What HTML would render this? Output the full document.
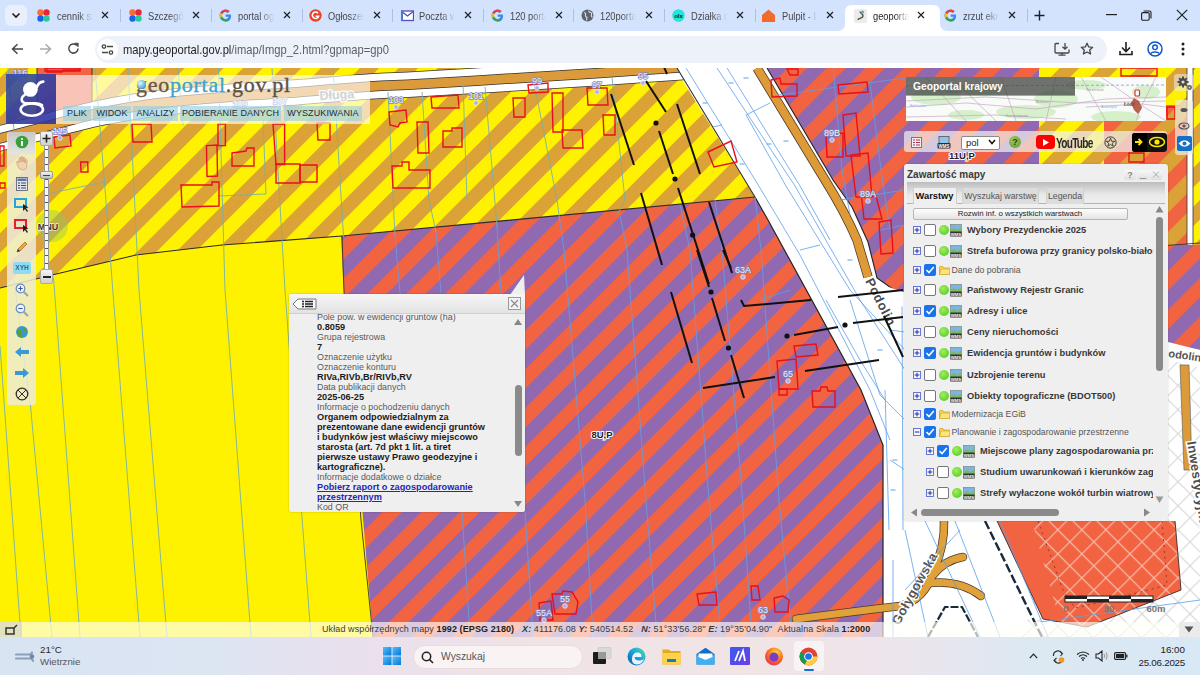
<!DOCTYPE html>
<html><head><meta charset="utf-8">
<style>
*{margin:0;padding:0;box-sizing:border-box}
html,body{width:1200px;height:675px;overflow:hidden;background:#fff;font-family:"Liberation Sans",sans-serif}
.abs{position:absolute}
svg{display:block}
#tabbar{position:absolute;left:0;top:0;width:1200px;height:31px;background:#d3e3fd}
.tt{position:absolute;top:8.5px;font-size:10.8px;line-height:14px;color:#474747;white-space:nowrap;width:42px;overflow:hidden;transform:scaleX(0.86);transform-origin:0 0;-webkit-mask-image:linear-gradient(90deg,#000 60%,transparent 100%)}
.tx{position:absolute;top:11px}
.tsep{position:absolute;top:9px;width:1px;height:13px;background:#a9c1ea}
#toolbar{position:absolute;left:0;top:31px;width:1200px;height:37px;background:#fff}
#omni{position:absolute;left:95px;top:36px;width:1012px;height:27px;border-radius:14px;background:#edf1f9}
#map{position:absolute;left:0;top:68px;width:1200px;height:569px;overflow:hidden;background:#fff200}
#status{position:absolute;left:0;top:622px;width:1200px;height:15px;background:rgba(255,255,250,0.66)}
#taskbar{position:absolute;left:0;top:637px;width:1200px;height:38px;background:linear-gradient(90deg,#d8e4f2 0%,#dde5f2 18%,#e9e0ee 28%,#f0e3e6 45%,#f1e4e5 62%,#ebe5ec 76%,#dde8f2 85%,#d8e8f5 100%)}
.menu{position:absolute;top:106px;height:15px;background:rgba(150,205,225,0.62);font-size:9px;color:#1b2e3a;text-align:center;line-height:15px;white-space:nowrap;letter-spacing:0.1px}
.pop div{font-size:8.9px;line-height:10px;color:#5a5a5a;white-space:nowrap;height:10px}
.pop div.b{font-weight:bold;color:#1c1c1c;font-size:9.2px}
.pop div.lnk{color:#2626b8;text-decoration:underline}
.hb{position:absolute;top:170px;width:12px;height:10px;border-radius:2px;background:linear-gradient(#f8f8f8,#dedede);font-size:9px;font-weight:bold;color:#888;text-align:center;line-height:10px}
.tab{position:absolute;top:187px;height:17px;background:#dcdcdc;border:1px solid #d0d0d0;border-bottom:none;font-size:8.8px;color:#555;text-align:center;line-height:17px;white-space:nowrap}
.lt{font-weight:bold;font-size:9.3px;color:#383838;white-space:nowrap;line-height:12px}
.ld{font-size:8.7px;color:#555;white-space:nowrap;line-height:12px}
</style></head><body>
<!-- ============ TAB BAR ============ -->
<div id="tabbar">
 <div class="abs" style="left:5px;top:5px;width:22px;height:21px;border-radius:6px;background:#e9effb"></div>
 <svg class="abs" style="left:11px;top:12px" width="10" height="7" viewBox="0 0 10 7"><path d="M1.5 1.5 L5 5 L8.5 1.5" stroke="#1f1f1f" stroke-width="1.6" fill="none"/></svg>
<svg class="abs" style="left:837px;top:4px" width="111" height="27" viewBox="0 0 111 27"><path d="M0 27 Q8 27 8 19 L8 8 Q8 1 15 1 L96 1 Q103 1 103 8 L103 19 Q103 27 111 27 Z" fill="#fff"/></svg>
<svg class="abs" style="left:36.5px;top:9px" width="13" height="14" viewBox="0 0 13 14"><circle cx="3.5" cy="3.5" r="3.2" fill="#f0703a"/><circle cx="9.5" cy="3.5" r="3.2" fill="#e8263a"/><circle cx="3.5" cy="9.5" r="3.2" fill="#1a63e8"/><circle cx="9.5" cy="9.5" r="3.2" fill="#2cc7a4"/></svg>
<div class="tt" style="left:57px;color:#474747">cennik sz</div>
<svg class="tx" style="left:101px" width="8" height="8" viewBox="0 0 8 8"><path d="M1 1L7 7M7 1L1 7" stroke="#1f1f1f" stroke-width="1.15"/></svg>
<div class="tsep" style="left:120px"></div>
<svg class="abs" style="left:128.5px;top:9px" width="13" height="14" viewBox="0 0 13 14"><circle cx="3.5" cy="3.5" r="3.2" fill="#f0703a"/><circle cx="9.5" cy="3.5" r="3.2" fill="#e8263a"/><circle cx="3.5" cy="9.5" r="3.2" fill="#1a63e8"/><circle cx="9.5" cy="9.5" r="3.2" fill="#2cc7a4"/></svg>
<div class="tt" style="left:148px;color:#474747">Szczegóły</div>
<svg class="tx" style="left:192px" width="8" height="8" viewBox="0 0 8 8"><path d="M1 1L7 7M7 1L1 7" stroke="#1f1f1f" stroke-width="1.15"/></svg>
<div class="tsep" style="left:211px"></div>
<svg class="abs" style="left:218.5px;top:9px" width="13" height="14" viewBox="0 0 13 14"><path d="M11.8 5.4H6.6v2.3h3a3 3 0 0 1-3 2.4 3.6 3.6 0 1 1 2.3-6.4l1.7-1.6A6 6 0 1 0 6.6 12.5c3.3 0 5.5-2.3 5.5-5.6 0-.5 0-1-.3-1.5z" fill="#4285f4"/><path d="M1.3 3.7l1.9 1.4A3.6 3.6 0 0 1 8.9 3.8l1.7-1.6A6 6 0 0 0 1.3 3.7z" fill="#ea4335"/><path d="M6.6 12.5a6 6 0 0 0 4-1.5L8.7 9.5a3.6 3.6 0 0 1-5.5-1.9L1.3 9.1a6 6 0 0 0 5.3 3.4z" fill="#34a853"/><path d="M1.3 3.7a6 6 0 0 0 0 5.4l1.9-1.5a3.6 3.6 0 0 1 0-2.5z" fill="#fbbc05"/></svg>
<div class="tt" style="left:238px;color:#474747">portal og</div>
<svg class="tx" style="left:283px" width="8" height="8" viewBox="0 0 8 8"><path d="M1 1L7 7M7 1L1 7" stroke="#1f1f1f" stroke-width="1.15"/></svg>
<div class="tsep" style="left:302px"></div>
<svg class="abs" style="left:308.5px;top:9px" width="13" height="14" viewBox="0 0 13 14"><circle cx="6.5" cy="6.5" r="6.2" fill="#e8452c"/><path d="M9 4.2A3.2 3.2 0 1 0 9.6 7.2H6.6" stroke="#fff" stroke-width="1.6" fill="none"/></svg>
<div class="tt" style="left:328px;color:#474747">Ogłoszen</div>
<svg class="tx" style="left:373px" width="8" height="8" viewBox="0 0 8 8"><path d="M1 1L7 7M7 1L1 7" stroke="#1f1f1f" stroke-width="1.15"/></svg>
<div class="tsep" style="left:392px"></div>
<svg class="abs" style="left:400.5px;top:9px" width="13" height="14" viewBox="0 0 13 14"><rect x="0.5" y="2" width="12" height="9.5" fill="#fff" stroke="#5b4bb5" stroke-width="1.3"/><path d="M0.8 2.5 L6.5 7 L12.2 2.5" stroke="#5b4bb5" stroke-width="1.3" fill="none"/><rect x="0" y="1.5" width="2" height="10.5" fill="#4a77d9"/></svg>
<div class="tt" style="left:419px;color:#474747">Poczta w</div>
<svg class="tx" style="left:464px" width="8" height="8" viewBox="0 0 8 8"><path d="M1 1L7 7M7 1L1 7" stroke="#1f1f1f" stroke-width="1.15"/></svg>
<div class="tsep" style="left:483px"></div>
<svg class="abs" style="left:490.5px;top:9px" width="13" height="14" viewBox="0 0 13 14"><path d="M11.8 5.4H6.6v2.3h3a3 3 0 0 1-3 2.4 3.6 3.6 0 1 1 2.3-6.4l1.7-1.6A6 6 0 1 0 6.6 12.5c3.3 0 5.5-2.3 5.5-5.6 0-.5 0-1-.3-1.5z" fill="#4285f4"/><path d="M1.3 3.7l1.9 1.4A3.6 3.6 0 0 1 8.9 3.8l1.7-1.6A6 6 0 0 0 1.3 3.7z" fill="#ea4335"/><path d="M6.6 12.5a6 6 0 0 0 4-1.5L8.7 9.5a3.6 3.6 0 0 1-5.5-1.9L1.3 9.1a6 6 0 0 0 5.3 3.4z" fill="#34a853"/><path d="M1.3 3.7a6 6 0 0 0 0 5.4l1.9-1.5a3.6 3.6 0 0 1 0-2.5z" fill="#fbbc05"/></svg>
<div class="tt" style="left:510px;color:#474747">120 porta</div>
<svg class="tx" style="left:555px" width="8" height="8" viewBox="0 0 8 8"><path d="M1 1L7 7M7 1L1 7" stroke="#1f1f1f" stroke-width="1.15"/></svg>
<div class="tsep" style="left:573px"></div>
<svg class="abs" style="left:580.5px;top:9px" width="13" height="14" viewBox="0 0 13 14"><circle cx="6.5" cy="6.5" r="6" fill="#5f6368"/><path d="M3 3.5c1.5.3 2 1.5 1.5 2.5s.5 2 1.5 2.3l-.5 3M8 1.5c-.5 1 .5 2 1.5 2s1.5 1.5 1 2.5c-.5 1 .2 2 1 2" stroke="#d3e3fd" stroke-width="1.1" fill="none"/></svg>
<div class="tt" style="left:600px;color:#474747">120portal</div>
<svg class="tx" style="left:645px" width="8" height="8" viewBox="0 0 8 8"><path d="M1 1L7 7M7 1L1 7" stroke="#1f1f1f" stroke-width="1.15"/></svg>
<div class="tsep" style="left:664px"></div>
<svg class="abs" style="left:671.5px;top:9px" width="13" height="14" viewBox="0 0 13 14"><circle cx="6.5" cy="6.5" r="6.3" fill="#23e5db"/><text x="6.5" y="8.6" font-size="6" font-weight="bold" text-anchor="middle" fill="#002f34" font-family="Liberation Sans">olx</text></svg>
<div class="tt" style="left:691px;color:#474747">Działka n</div>
<svg class="tx" style="left:736px" width="8" height="8" viewBox="0 0 8 8"><path d="M1 1L7 7M7 1L1 7" stroke="#1f1f1f" stroke-width="1.15"/></svg>
<div class="tsep" style="left:755px"></div>
<svg class="abs" style="left:761.5px;top:9px" width="13" height="14" viewBox="0 0 13 14"><path d="M6.5 0.5 L13 6 L13 13 L0 13 L0 6 Z" fill="#f26b2a"/></svg>
<div class="tt" style="left:782px;color:#474747">Pulpit - I</div>
<svg class="tx" style="left:826px" width="8" height="8" viewBox="0 0 8 8"><path d="M1 1L7 7M7 1L1 7" stroke="#1f1f1f" stroke-width="1.15"/></svg>
<svg class="abs" style="left:853.5px;top:9px" width="13" height="14" viewBox="0 0 13 14"><rect x="0" y="0" width="13" height="14" rx="2" fill="#ececec"/><path d="M4 11c0-2 5-1.5 5-4S6 4 6 2.5" stroke="#6b5a4a" stroke-width="1.6" fill="none"/><circle cx="8.5" cy="3" r="1.6" fill="#5aa9d6"/></svg>
<div class="tt" style="left:873px;color:#1f1f1f">geoportal</div>
<svg class="tx" style="left:917px" width="8" height="8" viewBox="0 0 8 8"><path d="M1 1L7 7M7 1L1 7" stroke="#1f1f1f" stroke-width="1.15"/></svg>
<svg class="abs" style="left:943.5px;top:9px" width="13" height="14" viewBox="0 0 13 14"><path d="M11.8 5.4H6.6v2.3h3a3 3 0 0 1-3 2.4 3.6 3.6 0 1 1 2.3-6.4l1.7-1.6A6 6 0 1 0 6.6 12.5c3.3 0 5.5-2.3 5.5-5.6 0-.5 0-1-.3-1.5z" fill="#4285f4"/><path d="M1.3 3.7l1.9 1.4A3.6 3.6 0 0 1 8.9 3.8l1.7-1.6A6 6 0 0 0 1.3 3.7z" fill="#ea4335"/><path d="M6.6 12.5a6 6 0 0 0 4-1.5L8.7 9.5a3.6 3.6 0 0 1-5.5-1.9L1.3 9.1a6 6 0 0 0 5.3 3.4z" fill="#34a853"/><path d="M1.3 3.7a6 6 0 0 0 0 5.4l1.9-1.5a3.6 3.6 0 0 1 0-2.5z" fill="#fbbc05"/></svg>
<div class="tt" style="left:963px;color:#474747">zrzut ekr</div>
<svg class="tx" style="left:1008px" width="8" height="8" viewBox="0 0 8 8"><path d="M1 1L7 7M7 1L1 7" stroke="#1f1f1f" stroke-width="1.15"/></svg>
<div class="tsep" style="left:1027px"></div>
<svg class="abs" style="left:1034px;top:10px" width="11" height="11" viewBox="0 0 11 11"><path d="M5.5 0.5V10.5M0.5 5.5H10.5" stroke="#1f1f1f" stroke-width="1.4"/></svg>
<svg class="abs" style="left:1106px;top:14px" width="11" height="2"><rect width="11" height="1.2" fill="#1f1f1f"/></svg>
<svg class="abs" style="left:1141px;top:10px" width="11" height="11" viewBox="0 0 11 11"><rect x="0.6" y="2.6" width="7.6" height="7.6" rx="1.2" fill="none" stroke="#1f1f1f" stroke-width="1.1"/><path d="M2.6 1 H8.5 Q10 1 10 2.5 V8.5" fill="none" stroke="#1f1f1f" stroke-width="1.1"/></svg>
<svg class="abs" style="left:1176px;top:9px" width="12" height="12" viewBox="0 0 12 12"><path d="M0.8 0.8L11.2 11.2M11.2 0.8L0.8 11.2" stroke="#1f1f1f" stroke-width="1.2"/></svg>
</div>
<!-- ============ TOOLBAR ============ -->
<div id="toolbar"></div>
<div id="omni"></div>
<svg class="abs" style="left:11px;top:43px" width="13" height="12" viewBox="0 0 13 12"><path d="M12 6H1.8M6.5 1.2L1.5 6l5 4.8" stroke="#474747" stroke-width="1.5" fill="none"/></svg>
<svg class="abs" style="left:39px;top:43px" width="13" height="12" viewBox="0 0 13 12"><path d="M1 6h10.2M6.5 1.2l5 4.8-5 4.8" stroke="#a8abb0" stroke-width="1.5" fill="none"/></svg>
<svg class="abs" style="left:67px;top:42px" width="13" height="13" viewBox="0 0 13 13"><path d="M11 6.5A4.6 4.6 0 1 1 9.6 3.2" stroke="#474747" stroke-width="1.5" fill="none"/><path d="M7.6 1.2h3.6v3.6z" fill="#474747" stroke="#474747" stroke-width="0.8"/></svg>
<div class="abs" style="left:97px;top:39px;width:21px;height:21px;border-radius:50%;background:#fff"></div>
<svg class="abs" style="left:101px;top:43px" width="13" height="13" viewBox="0 0 13 13"><circle cx="3" cy="3.5" r="1.7" fill="none" stroke="#474747" stroke-width="1.3"/><path d="M6 3.5h6M1 9.5h6" stroke="#474747" stroke-width="1.3"/><circle cx="10" cy="9.5" r="1.7" fill="none" stroke="#474747" stroke-width="1.3"/></svg>
<div class="abs" style="left:123px;top:42px;font-size:13px;line-height:16px;color:#1f1f1f;white-space:nowrap;transform:scaleX(0.86);transform-origin:0 0">mapy.geoportal.gov.pl<span style="color:#5b5e66">/imap/Imgp_2.html?gpmap=gp0</span></div>
<svg class="abs" style="left:1054px;top:42px" width="16" height="14" viewBox="0 0 16 14"><path d="M5 1.5H2a1 1 0 0 0-1 1v7.5a1 1 0 0 0 1 1h12a1 1 0 0 0 1-1V7.5M4.5 13.2h7M8 11v2" stroke="#474747" stroke-width="1.3" fill="none"/><path d="M11 1v6M8.5 4.8L11 7.2l2.5-2.4" stroke="#474747" stroke-width="1.3" fill="none"/></svg>
<svg class="abs" style="left:1080px;top:42px" width="14" height="14" viewBox="0 0 14 14"><path d="M7 1.2l1.7 3.7 4 .4-3 2.7.9 4L7 10 3.4 12l.9-4-3-2.7 4-.4z" stroke="#474747" stroke-width="1.3" fill="none" stroke-linejoin="round"/></svg>
<svg class="abs" style="left:1119px;top:41px" width="14" height="15" viewBox="0 0 14 15"><path d="M7 1v9M3 6.5l4 4 4-4M1 10v3.5h12V10" stroke="#1f1f1f" stroke-width="1.6" fill="none"/></svg>
<svg class="abs" style="left:1147px;top:41px" width="16" height="16" viewBox="0 0 16 16"><circle cx="8" cy="8" r="7" fill="none" stroke="#0b57d0" stroke-width="1.5"/><circle cx="8" cy="6.3" r="2.3" fill="none" stroke="#0b57d0" stroke-width="1.4"/><path d="M3.6 12.6c1.3-2.2 7.5-2.2 8.8 0" fill="none" stroke="#0b57d0" stroke-width="1.4"/></svg>
<svg class="abs" style="left:1181px;top:42px" width="4" height="14" viewBox="0 0 4 14"><circle cx="2" cy="2" r="1.5" fill="#1f1f1f"/><circle cx="2" cy="7" r="1.5" fill="#1f1f1f"/><circle cx="2" cy="12" r="1.5" fill="#1f1f1f"/></svg>


<!-- ============ MAP ============ -->
<div id="map">
<svg width="1200" height="569" viewBox="0 68 1200 569" font-family="Liberation Sans">
<defs>
<pattern id="pYB" patternUnits="userSpaceOnUse" width="27.5" height="27.5" patternTransform="rotate(45)">
<rect width="27.5" height="27.5" fill="#fff200"/><rect width="13.75" height="27.5" fill="#dba237"/></pattern>
<pattern id="pPO" patternUnits="userSpaceOnUse" width="27.5" height="27.5" patternTransform="rotate(45)">
<rect width="27.5" height="27.5" fill="#9069b0"/><rect width="13.75" height="27.5" fill="#f26342"/></pattern>
<pattern id="pBO" patternUnits="userSpaceOnUse" width="27.5" height="27.5" patternTransform="rotate(45)">
<rect width="27.5" height="27.5" fill="#f26342"/><rect width="13.75" height="27.5" fill="#dba237"/></pattern>
<clipPath id="clipL"><polygon points="-20,0 680,0 677,68 755,197 -20,300"/></clipPath>
<pattern id="pX" patternUnits="userSpaceOnUse" width="17" height="17" patternTransform="rotate(45)">
<path d="M0 0.6H17M0.6 0V17" stroke="#d9d9d9" stroke-width="1.2" fill="none"/></pattern>
<pattern id="pXo" patternUnits="userSpaceOnUse" width="17" height="17" patternTransform="rotate(45)">
<path d="M0 0.6H17M0.6 0V17" stroke="#f6b8a4" stroke-width="1.3" fill="none"/></pattern>
</defs>
<rect x="0" y="68" width="1200" height="569" fill="#fff200"/>

<polygon points="0,68 675,68 755,197 342,236 222,245 136,255 52,275 0,288" fill="url(#pYB)"/>
<polygon points="341,236 755,197 768,220 861,390 883,445 883,637 373,637 344,292" fill="url(#pPO)"/>
<polygon points="675,68 1200,68 1200,637 883,637 883,445 861,390 768,220 755,197" fill="#fff"/>
<polygon points="767,68 1039,68 1039,165 1104,165 1104,250 1167,250 1167,245 1190,245 1190,340 1160,340 904,297 877,278 868,242 852,207 833,180" fill="url(#pPO)"/>
<polygon points="1039,68 1187,68 1187,105 1104,105 1104,165 1039,165" fill="url(#pYB)"/>
<polygon points="1104,105 1187,105 1190,245 1104,250" fill="url(#pBO)"/>
<polygon points="1193,68 1200,68 1200,245 1193,245" fill="url(#pYB)"/>
<polygon points="1167,245 1200,245 1200,350 1167,345" fill="url(#pPO)"/>
<polygon points="1060,521 1200,521 1200,637 1022,637" fill="url(#pX)"/>
<polygon points="1160,350 1200,350 1200,521 1160,521" fill="url(#pX)"/>
<polygon points="997,521 1175,521 1181,590 1087,627 1043,619" fill="#f26342"/>
<polygon points="1032,521 1175,521 1181,590 1087,627 1060,622" fill="url(#pXo)"/>
<polyline points="997,521 1043,619 1087,627 1181,590 1175,521" fill="none" stroke="#3a2a2a" stroke-width="0.9"/>
<polyline points="1038,521 1063,590 1075,608 1110,600 1167,585 1162,521" fill="none" stroke="#7a3020" stroke-width="0.8" stroke-dasharray="2 4"/>
<polyline points="0,288 52,275 136,255 222,245 342,236 755,197" fill="none" stroke="#2a2a2a" stroke-width="1.1"/>
<polyline points="342,236 344,292 361,520 373,637" fill="none" stroke="#333" stroke-width="0.9"/>
<polyline points="755,197 768,220 861,390 883,445 883,637" fill="none" stroke="#222" stroke-width="1.2"/>
<polygon points="37,68 92,68 92,118 37,130" fill="#f26342"/>
<polyline points="47,68 47,72 62,72 63,70 80,70 80,68" fill="none" stroke="#e8101a" stroke-width="1.3"/>
<polyline points="37,68 37,130" fill="none" stroke="#333" stroke-width="1"/><polyline points="92,68 92,118" fill="none" stroke="#333" stroke-width="1"/>
<g clip-path="url(#clipL)">
<path d="M-10 141 C-1.7 138.8 21.7 132.7 40 128 C58.3 123.3 80.0 117.2 100 113 C120.0 108.8 136.7 105.8 160 103 C183.3 100.2 216.7 97.8 240 96 C263.3 94.2 278.3 93.6 300 92 C321.7 90.4 350.0 87.8 370 86.5 C390.0 85.2 395.0 85.4 420 84 C445.0 82.6 490.0 79.8 520 78 C550.0 76.2 570.0 75.0 600 73 C630.0 71.0 683.3 67.2 700 66" fill="none" stroke="#333" stroke-width="26"/>
<path d="M-10 141 C-1.7 138.8 21.7 132.7 40 128 C58.3 123.3 80.0 117.2 100 113 C120.0 108.8 136.7 105.8 160 103 C183.3 100.2 216.7 97.8 240 96 C263.3 94.2 278.3 93.6 300 92 C321.7 90.4 350.0 87.8 370 86.5 C390.0 85.2 395.0 85.4 420 84 C445.0 82.6 490.0 79.8 520 78 C550.0 76.2 570.0 75.0 600 73 C630.0 71.0 683.3 67.2 700 66" fill="none" stroke="#fff" stroke-width="24.5"/>
<path d="M-10 141 C-1.7 138.8 21.7 132.7 40 128 C58.3 123.3 80.0 117.2 100 113 C120.0 108.8 136.7 105.8 160 103 C183.3 100.2 216.7 97.8 240 96 C263.3 94.2 278.3 93.6 300 92 C321.7 90.4 350.0 87.8 370 86.5 C390.0 85.2 395.0 85.4 420 84 C445.0 82.6 490.0 79.8 520 78 C550.0 76.2 570.0 75.0 600 73 C630.0 71.0 683.3 67.2 700 66" fill="none" stroke="#333" stroke-width="10.5"/>
<path d="M-10 141 C-1.7 138.8 21.7 132.7 40 128 C58.3 123.3 80.0 117.2 100 113 C120.0 108.8 136.7 105.8 160 103 C183.3 100.2 216.7 97.8 240 96 C263.3 94.2 278.3 93.6 300 92 C321.7 90.4 350.0 87.8 370 86.5 C390.0 85.2 395.0 85.4 420 84 C445.0 82.6 490.0 79.8 520 78 C550.0 76.2 570.0 75.0 600 73 C630.0 71.0 683.3 67.2 700 66" fill="none" stroke="#dc9b3a" stroke-width="9"/>
</g>
<polyline points="672,60 677,68 755,197" fill="none" stroke="#333" stroke-width="1.1"/>
<path d="M757 68 L825 180 Q845 212 857 240 L868 277" fill="none" stroke="#4a3a2a" stroke-width="9.5"/>
<path d="M757 68 L825 180 Q845 212 857 240 L868 277" fill="none" stroke="#dd9a36" stroke-width="8"/>
<polyline points="767,68 833,180 852,207 868,242 877,278 904,297" fill="none" stroke="#222" stroke-width="1.1"/>
<polyline points="686,68 757,183 800,255 870,390 890,440" fill="none" stroke="#5aa0ea" stroke-width="0.8"/>
<polyline points="717,68 795,186 860,300 905,370" fill="none" stroke="#5aa0ea" stroke-width="0.8"/>
<polyline points="727,68 800,186 830,240" fill="none" stroke="#5aa0ea" stroke-width="0.8"/>
<polyline points="746,115 786,186 850,290 905,350" fill="none" stroke="#5aa0ea" stroke-width="0.8"/>
<polyline points="746,115 770,103" fill="none" stroke="#5aa0ea" stroke-width="0.8"/>
<polyline points="713,127 722,125" fill="none" stroke="#5aa0ea" stroke-width="0.8"/>
<polyline points="760,300 790,290" fill="none" stroke="#5aa0ea" stroke-width="0.8"/>
<polyline points="800,250 820,245" fill="none" stroke="#5aa0ea" stroke-width="0.8"/>
<polyline points="850,300 880,395 905,420" fill="none" stroke="#5aa0ea" stroke-width="0.8"/>
<polyline points="890,330 905,332" fill="none" stroke="#5aa0ea" stroke-width="0.8"/>
<polyline points="885,390 889,530" fill="none" stroke="#5aa0ea" stroke-width="0.8"/>
<polyline points="902,300 903,530" fill="none" stroke="#5aa0ea" stroke-width="0.8"/>
<polyline points="826,300 860,360 885,400" fill="none" stroke="#5aa0ea" stroke-width="0.8"/>
<path d="M743.5 78h5" stroke="#5aa0ea" stroke-width="1"/>
<path d="M728.5 83h5" stroke="#5aa0ea" stroke-width="1"/>
<path d="M702.5 103h5" stroke="#5aa0ea" stroke-width="1"/>
<path d="M783.5 141h5" stroke="#5aa0ea" stroke-width="1"/>
<path d="M766.5 144h5" stroke="#5aa0ea" stroke-width="1"/>
<path d="M739.5 164h5" stroke="#5aa0ea" stroke-width="1"/>
<path d="M847.5 260h5" stroke="#5aa0ea" stroke-width="1"/>
<path d="M887.5 300h5" stroke="#5aa0ea" stroke-width="1"/>
<path d="M877.5 350h5" stroke="#5aa0ea" stroke-width="1"/>
<path d="M892.5 460h5" stroke="#5aa0ea" stroke-width="1"/>
<path d="M890.5 490h5" stroke="#5aa0ea" stroke-width="1"/>
<polyline points="772,96 860,84 905,78" fill="none" stroke="#6a9ae0" stroke-width="0.8"/>
<polyline points="833,66 842,170 850,215" fill="none" stroke="#6a9ae0" stroke-width="0.8"/>
<polyline points="870,83 881,170 890,230" fill="none" stroke="#6a9ae0" stroke-width="0.8"/>
<path d="M860 285 L905 300" stroke="#fff" stroke-width="14"/>
<text x="0" y="0" transform="translate(865,281) rotate(63)" font-size="13" font-weight="bold" fill="#4a4a4a" stroke="#fff" stroke-width="3" paint-order="stroke" letter-spacing="0.6">Podolin</text>
<rect x="1187" y="68" width="6" height="177" fill="#fff"/><path d="M1187 68V245M1193 68V245" stroke="#333" stroke-width="0.8"/><path d="M1104 250 L1200 243" stroke="#333" stroke-width="0.9"/>
<polygon points="1160,340 1200,350 1200,368 1160,358" fill="#fff"/>
<text transform="translate(1168,357) rotate(8)" font-size="11" font-weight="bold" fill="#555" stroke="#fff" stroke-width="2.5" paint-order="stroke">odolin</text>
<polygon points="1180,365 1189,365 1192,470 1184,470" fill="#dc9b3a" stroke="#555" stroke-width="0.6"/>
<text transform="translate(1187,442) rotate(81)" font-size="13" font-weight="bold" fill="#4e4e4e" stroke="#fff" stroke-width="3" paint-order="stroke" letter-spacing="0.4">Inwestycyjna</text>
<path d="M796 619 Q850 612 900 606 Q925 600 934 570 Q945 545 944 521" fill="none" stroke="#4a3a2a" stroke-width="8.5" stroke-linecap="round"/>
<path d="M933 575 Q945 560 963 557 M930 583 Q960 580 981 596" fill="none" stroke="#4a3a2a" stroke-width="8.5" stroke-linecap="round"/>
<path d="M796 619 Q850 612 900 606 Q925 600 934 570 Q945 545 944 521" fill="none" stroke="#e0a03a" stroke-width="7" stroke-linecap="round"/>
<path d="M933 575 Q945 560 963 557 M930 583 Q960 580 981 596" fill="none" stroke="#e0a03a" stroke-width="7" stroke-linecap="round"/>
<text transform="translate(899,626) rotate(-61)" font-size="13" font-weight="bold" fill="#555" stroke="#fff" stroke-width="3" paint-order="stroke" letter-spacing="0.4">Gołygowska</text>
<path d="M985 521 L1042 637" stroke="#1a2a3a" stroke-width="2.4" stroke-dasharray="9 3"/>
<path d="M928 637 L945 607 L962 607 L978 637" fill="none" stroke="#1a2a3a" stroke-width="2.2" stroke-dasharray="8 2"/>
<polyline points="905,530 928,637" fill="none" stroke="#5aa0ea" stroke-width="0.8"/>
<polyline points="955,521 1000,637" fill="none" stroke="#5aa0ea" stroke-width="0.8"/>
<polyline points="925,521 980,637" fill="none" stroke="#5aa0ea" stroke-width="0.8"/>
<polyline points="1000,521 1048,637" fill="none" stroke="#5aa0ea" stroke-width="0.8"/>
<polyline points="890,460 905,470" fill="none" stroke="#5aa0ea" stroke-width="0.8"/>
<polyline points="893,560 893,637" fill="none" stroke="#5aa0ea" stroke-width="0.8"/>
<polyline points="905,590 960,530" fill="none" stroke="#5aa0ea" stroke-width="0.8"/>
<polyline points="1040,622 1200,600" fill="none" stroke="#5aa0ea" stroke-width="0.8"/>
<rect x="1065" y="596" width="88" height="6" fill="#fff" stroke="#222" stroke-width="1"/>
<rect x="1065" y="596" width="22" height="3" fill="#222"/><rect x="1109" y="596" width="22" height="3" fill="#222"/><rect x="1087" y="599" width="22" height="3" fill="#222"/><rect x="1131" y="599" width="22" height="3" fill="#222"/>
<text x="1066" y="612" font-size="9.5" font-weight="bold" fill="#777" text-anchor="middle">0</text><text x="1109" y="612" font-size="9.5" font-weight="bold" fill="#777" text-anchor="middle">30</text><text x="1156" y="612" font-size="9.5" font-weight="bold" fill="#777" text-anchor="middle">60m</text>
<polyline points="95,68 104.5,182 112,280 140,637" fill="none" stroke="#78b0a8" stroke-width="0.9"/>
<polyline points="128,68 139,290 167,637" fill="none" stroke="#78b0a8" stroke-width="0.9"/>
<polyline points="218.5,68 225,290 251,637" fill="none" stroke="#78b0a8" stroke-width="0.9"/>
<polyline points="272,68 285,290 288.7,341 311,637" fill="none" stroke="#78b0a8" stroke-width="0.9"/>
<polyline points="0,346 21,637" fill="none" stroke="#78b0a8" stroke-width="0.9"/>
<polyline points="14,280 30.7,408 52,637" fill="none" stroke="#78b0a8" stroke-width="0.9"/>
<polyline points="50.7,269 53.7,280 80,637" fill="none" stroke="#78b0a8" stroke-width="0.9"/>
<polyline points="50.7,193 104.5,182" fill="none" stroke="#78b0a8" stroke-width="0.9"/>
<polyline points="218.5,196 266,194" fill="none" stroke="#78b0a8" stroke-width="0.9"/>
<polyline points="263,120 266,194" fill="none" stroke="#78b0a8" stroke-width="0.9"/>
<polyline points="333,68 343.6,237" fill="none" stroke="#78b0a8" stroke-width="0.9"/>
<polyline points="388,92 395,236" fill="none" stroke="#78b0a8" stroke-width="0.9"/>
<polyline points="422,92 429,200 436,232" fill="none" stroke="#78b0a8" stroke-width="0.9"/>
<polyline points="463,83 467,200" fill="none" stroke="#78b0a8" stroke-width="0.9"/>
<polyline points="485,87 497,226" fill="none" stroke="#78b0a8" stroke-width="0.9"/>
<polyline points="533,77 557,200 560,222" fill="none" stroke="#78b0a8" stroke-width="0.9"/>
<polyline points="612,77 625,200 617,215" fill="none" stroke="#78b0a8" stroke-width="0.9"/>
<polyline points="8,68 14,130" fill="none" stroke="#78b0a8" stroke-width="0.9"/>
<polyline points="178,68 183,125" fill="none" stroke="#78b0a8" stroke-width="0.9"/>
<polyline points="395,236 400,293 462,512 470,637" fill="none" stroke="#6a9ae0" stroke-width="0.9"/>
<polyline points="436,232 441,293" fill="none" stroke="#6a9ae0" stroke-width="0.9"/>
<polyline points="497,226 501,293" fill="none" stroke="#6a9ae0" stroke-width="0.9"/>
<polyline points="525,512 533,637" fill="none" stroke="#6a9ae0" stroke-width="0.9"/>
<polyline points="564,250 585,500 593,637" fill="none" stroke="#6a9ae0" stroke-width="0.9"/>
<polyline points="627,250 646,500 657,637" fill="none" stroke="#6a9ae0" stroke-width="0.9"/>
<polyline points="690,250 709,500 721,637" fill="none" stroke="#6a9ae0" stroke-width="0.9"/>
<polyline points="722,250 741,480 752,637" fill="none" stroke="#6a9ae0" stroke-width="0.9"/>
<polyline points="761,250 779,500 792,637" fill="none" stroke="#6a9ae0" stroke-width="0.9"/>
<polyline points="560,222 564,250" fill="none" stroke="#6a9ae0" stroke-width="0.9"/>
<polyline points="620,215 627,250" fill="none" stroke="#6a9ae0" stroke-width="0.9"/>
<polyline points="680,205 690,250" fill="none" stroke="#6a9ae0" stroke-width="0.9"/>
<polyline points="715,200 722,250" fill="none" stroke="#6a9ae0" stroke-width="0.9"/>
<polyline points="755,197 761,250" fill="none" stroke="#6a9ae0" stroke-width="0.9"/>
<polyline points="840,200 905,190" fill="none" stroke="#6a9ae0" stroke-width="0.9"/>
<polyline points="880,230 905,225" fill="none" stroke="#6a9ae0" stroke-width="0.9"/>
<polygon points="54,137 70,135 71,146 55,148" fill="none" stroke="#e8101a" stroke-width="1.4"/>
<polygon points="80.6,162 87.7,162 88,172 81,172" fill="none" stroke="#e8101a" stroke-width="1.4"/>
<polygon points="132,124 151,124 152,142 133,142" fill="none" stroke="#e8101a" stroke-width="1.4"/>
<polygon points="206.5,145.6 217,145 217.5,176 207,176.5" fill="none" stroke="#e8101a" stroke-width="1.4"/>
<polygon points="232,153 246,151 247,148 254,148 254,166 232,166" fill="none" stroke="#e8101a" stroke-width="1.4"/>
<polygon points="181,185 212,185 212,182 219,182 219,206 182,207" fill="none" stroke="#e8101a" stroke-width="1.4"/>
<polygon points="218,124 225.4,124 225.4,145.6 218,145.6" fill="none" stroke="#e8101a" stroke-width="1.4"/>
<polygon points="273,124 284.6,124 284.6,164.5 276,164.5" fill="none" stroke="#e8101a" stroke-width="1.4"/>
<polygon points="276,164 300,164 300,183 276,183" fill="none" stroke="#e8101a" stroke-width="1.4"/>
<polygon points="0,146 4,146 4,166 0,166" fill="none" stroke="#e8101a" stroke-width="1.4"/>
<polygon points="0,183 5,183 5,188 0,188" fill="none" stroke="#e8101a" stroke-width="1.4"/>
<polygon points="389,112 406,110 407,122 400,123 398,127 390,125" fill="none" stroke="#e8101a" stroke-width="1.4"/>
<polygon points="431,97 458,95 459,108 432,108" fill="none" stroke="#e8101a" stroke-width="1.4"/>
<polygon points="417,122 428,122 429,153 418,153" fill="none" stroke="#e8101a" stroke-width="1.4"/>
<polygon points="443,131 452,131 452,128 462,128 462,147 443,147" fill="none" stroke="#e8101a" stroke-width="1.4"/>
<polygon points="317,123 330,123 330,140 318,140" fill="none" stroke="#e8101a" stroke-width="1.4"/>
<polygon points="300,165 317,165 317,182 300,182" fill="none" stroke="#e8101a" stroke-width="1.4"/>
<polygon points="392,166 402,166 402,162 409,162 409,170 430,170 430,188 393,188" fill="none" stroke="#e8101a" stroke-width="1.4"/>
<polygon points="513,98 525,98 525,117 514,117" fill="none" stroke="#e8101a" stroke-width="1.4"/>
<polygon points="528,85 548,83 548,92 529,93" fill="none" stroke="#e8101a" stroke-width="1.4"/>
<polygon points="552,93 563,93 563,132 553,132" fill="none" stroke="#e8101a" stroke-width="1.4"/>
<polygon points="562,130 582,130 583,148 563,148" fill="none" stroke="#e8101a" stroke-width="1.4"/>
<polygon points="587,88 607,88 608,105 588,105" fill="none" stroke="#e8101a" stroke-width="1.4"/>
<polygon points="603,115 615,115 615,135 604,135" fill="none" stroke="#e8101a" stroke-width="1.4"/>
<polygon points="708,152 731,141 737,162 714,167" fill="none" stroke="#e8101a" stroke-width="1.4"/>
<polygon points="771,80 780,78 781,84 797,84 797,96 772,97" fill="none" stroke="#e8101a" stroke-width="1.4"/>
<polygon points="787,69 798,69 798,75 790,75" fill="none" stroke="#e8101a" stroke-width="1.4"/>
<polygon points="838,85 867,82 868,92 839,94" fill="none" stroke="#e8101a" stroke-width="1.4"/>
<polygon points="826,135 843,133 843,157 827,157" fill="none" stroke="#e8101a" stroke-width="1.4"/>
<polygon points="843,115 856,113 860,156 846,156" fill="none" stroke="#e8101a" stroke-width="1.4"/>
<polygon points="851,155 868,153 872,197 856,197" fill="none" stroke="#e8101a" stroke-width="1.4"/>
<polygon points="861.6,197 876,196 882,219 864,219" fill="none" stroke="#e8101a" stroke-width="1.4"/>
<polygon points="879,222 891,220 893,253 881,254" fill="none" stroke="#e8101a" stroke-width="1.4"/>
<polygon points="794,346 816,344 818,355 796,357" fill="none" stroke="#e8101a" stroke-width="1.4"/>
<polygon points="777,361 796,359 798,389 779,389" fill="none" stroke="#e8101a" stroke-width="1.4"/>
<polygon points="779,389 787,389 787,395 779,395" fill="none" stroke="#e8101a" stroke-width="1.4"/>
<polygon points="812,391 820,391 821,387 827,387 828,391 835,391 835,407 813,407" fill="none" stroke="#e8101a" stroke-width="1.4"/>
<polygon points="539,603 551,601 553,620 540,620" fill="none" stroke="#e8101a" stroke-width="1.4"/>
<polygon points="552,594 562,594 563,591 572,592 578,602 576,614 555,614" fill="none" stroke="#e8101a" stroke-width="1.4"/>
<polygon points="697,594 716,592 717,605 699,605" fill="none" stroke="#e8101a" stroke-width="1.4"/>
<polygon points="751,586 758,586 760,600 752,600" fill="none" stroke="#e8101a" stroke-width="1.4"/>
<polygon points="774,598 783,596 789,600 788,612 775,612" fill="none" stroke="#e8101a" stroke-width="1.4"/>
<polygon points="45,68 80,68 80,71 45,71" fill="none" stroke="#e8101a" stroke-width="1.4"/>
<polygon points="1121,68 1157,68 1157,76 1121,76" fill="none" stroke="#e8101a" stroke-width="1.4"/>
<polygon points="1167,107 1175,107 1175,119 1167,119" fill="none" stroke="#e8101a" stroke-width="1.4"/>
<polygon points="1129,153 1144,153 1144,162 1129,162" fill="none" stroke="#e8101a" stroke-width="1.4"/>
<line x1="611" y1="94" x2="634" y2="165" stroke="#111" stroke-width="2"/>
<line x1="646" y1="81" x2="666" y2="112" stroke="#111" stroke-width="2"/>
<line x1="659" y1="131" x2="673" y2="174" stroke="#111" stroke-width="2"/>
<line x1="677" y1="104" x2="700" y2="174" stroke="#111" stroke-width="2"/>
<line x1="641" y1="193" x2="662" y2="265" stroke="#111" stroke-width="2"/>
<line x1="678" y1="188" x2="709" y2="284" stroke="#111" stroke-width="2"/>
<line x1="709" y1="202" x2="732" y2="273" stroke="#111" stroke-width="2"/>
<line x1="664" y1="67" x2="667" y2="74" stroke="#111" stroke-width="2"/>
<line x1="697" y1="250" x2="709" y2="287" stroke="#111" stroke-width="2"/>
<line x1="712" y1="298" x2="725" y2="341" stroke="#111" stroke-width="2"/>
<line x1="731" y1="355" x2="744" y2="398" stroke="#111" stroke-width="2"/>
<line x1="671" y1="292" x2="692" y2="363" stroke="#111" stroke-width="2"/>
<line x1="703" y1="388" x2="775" y2="377" stroke="#111" stroke-width="2"/>
<line x1="794" y1="335" x2="838" y2="327" stroke="#111" stroke-width="2"/>
<line x1="853" y1="323" x2="903" y2="317" stroke="#111" stroke-width="2"/>
<line x1="805" y1="371" x2="879" y2="360" stroke="#111" stroke-width="2"/>
<line x1="838" y1="297" x2="903" y2="290" stroke="#111" stroke-width="2"/>
<line x1="723" y1="250" x2="731" y2="268" stroke="#111" stroke-width="2"/>
<line x1="884" y1="316" x2="903" y2="357" stroke="#111" stroke-width="2"/>
<polyline points="741,300 744,306 811,300" fill="none" stroke="#111" stroke-width="2"/>
<circle cx="656" cy="123" r="2.6" fill="#111"/>
<circle cx="675" cy="179" r="2.6" fill="#111"/>
<circle cx="692.6" cy="235" r="2.6" fill="#111"/>
<circle cx="711" cy="292" r="2.6" fill="#111"/>
<circle cx="728.5" cy="348" r="2.6" fill="#111"/>
<circle cx="787" cy="336" r="2.6" fill="#111"/>
<circle cx="845" cy="325" r="2.6" fill="#111"/>
<text x="743" y="273" font-size="9" text-anchor="middle" fill="#eeeefa" stroke="#7c84c4" stroke-width="1.4" paint-order="stroke">63A</text>
<circle cx="743" cy="277" r="2.3" fill="#a8b0e8" stroke="#e8e8f8" stroke-width="0.8"/>
<text x="788" y="377" font-size="9" text-anchor="middle" fill="#eeeefa" stroke="#7c84c4" stroke-width="1.4" paint-order="stroke">65</text>
<circle cx="788" cy="381" r="2.3" fill="#a8b0e8" stroke="#e8e8f8" stroke-width="0.8"/>
<text x="832" y="136" font-size="9" text-anchor="middle" fill="#eeeefa" stroke="#7c84c4" stroke-width="1.4" paint-order="stroke">89B</text>
<circle cx="832" cy="140" r="2.3" fill="#a8b0e8" stroke="#e8e8f8" stroke-width="0.8"/>
<text x="868" y="197" font-size="9" text-anchor="middle" fill="#eeeefa" stroke="#7c84c4" stroke-width="1.4" paint-order="stroke">89A</text>
<circle cx="868" cy="201" r="2.3" fill="#a8b0e8" stroke="#e8e8f8" stroke-width="0.8"/>
<text x="565" y="602" font-size="9" text-anchor="middle" fill="#eeeefa" stroke="#7c84c4" stroke-width="1.4" paint-order="stroke">55</text>
<circle cx="565" cy="606" r="2.3" fill="#a8b0e8" stroke="#e8e8f8" stroke-width="0.8"/>
<text x="544" y="616" font-size="9" text-anchor="middle" fill="#eeeefa" stroke="#7c84c4" stroke-width="1.4" paint-order="stroke">55A</text>
<circle cx="544" cy="620" r="2.3" fill="#a8b0e8" stroke="#e8e8f8" stroke-width="0.8"/>
<text x="763" y="613" font-size="9" text-anchor="middle" fill="#eeeefa" stroke="#7c84c4" stroke-width="1.4" paint-order="stroke">63</text>
<circle cx="763" cy="617" r="2.3" fill="#a8b0e8" stroke="#e8e8f8" stroke-width="0.8"/>
<text x="396" y="103" font-size="9" text-anchor="middle" fill="#eeeefa" stroke="#7c84c4" stroke-width="1.4" paint-order="stroke">103</text>
<circle cx="396" cy="107" r="2.3" fill="#a8b0e8" stroke="#e8e8f8" stroke-width="0.8"/>
<text x="476" y="99" font-size="9" text-anchor="middle" fill="#eeeefa" stroke="#7c84c4" stroke-width="1.4" paint-order="stroke">101</text>
<circle cx="476" cy="103" r="2.3" fill="#a8b0e8" stroke="#e8e8f8" stroke-width="0.8"/>
<text x="537" y="84" font-size="9" text-anchor="middle" fill="#eeeefa" stroke="#7c84c4" stroke-width="1.4" paint-order="stroke">99</text>
<circle cx="537" cy="88" r="2.3" fill="#a8b0e8" stroke="#e8e8f8" stroke-width="0.8"/>
<text x="597" y="88" font-size="9" text-anchor="middle" fill="#eeeefa" stroke="#7c84c4" stroke-width="1.4" paint-order="stroke">97</text>
<circle cx="597" cy="92" r="2.3" fill="#a8b0e8" stroke="#e8e8f8" stroke-width="0.8"/>
<text x="643" y="79" font-size="9" text-anchor="middle" fill="#eeeefa" stroke="#7c84c4" stroke-width="1.4" paint-order="stroke">95</text>
<circle cx="643" cy="83" r="2.3" fill="#a8b0e8" stroke="#e8e8f8" stroke-width="0.8"/>
<text x="240" y="107" font-size="9" text-anchor="middle" fill="#eeeefa" stroke="#7c84c4" stroke-width="1.4" paint-order="stroke">109</text>
<circle cx="240" cy="111" r="2.3" fill="#a8b0e8" stroke="#e8e8f8" stroke-width="0.8"/>
<text x="280" y="104" font-size="9" text-anchor="middle" fill="#eeeefa" stroke="#7c84c4" stroke-width="1.4" paint-order="stroke">107</text>
<circle cx="280" cy="108" r="2.3" fill="#a8b0e8" stroke="#e8e8f8" stroke-width="0.8"/>
<text x="60" y="134" font-size="9" text-anchor="middle" fill="#eeeefa" stroke="#7c84c4" stroke-width="1.4" paint-order="stroke">115</text>
<circle cx="60" cy="138" r="2.3" fill="#a8b0e8" stroke="#e8e8f8" stroke-width="0.8"/>
<text x="20" y="76" font-size="9" text-anchor="middle" fill="#eeeefa" stroke="#7c84c4" stroke-width="1.4" paint-order="stroke">116</text>
<circle cx="20" cy="80" r="2.3" fill="#a8b0e8" stroke="#e8e8f8" stroke-width="0.8"/>
<text x="602" y="438" font-size="9.5" font-weight="bold" text-anchor="middle" fill="#222" stroke="#fff" stroke-width="2" paint-order="stroke">8U,P</text>
<text x="962" y="159" font-size="9.5" font-weight="bold" text-anchor="middle" fill="#222" stroke="#fff" stroke-width="2" paint-order="stroke">11U,P</text>
<circle cx="52" cy="226" r="16" fill="rgba(150,200,90,0.45)"/>
<text x="48" y="230" font-size="9" font-weight="bold" text-anchor="middle" fill="#333" stroke="#eee" stroke-width="1.5" paint-order="stroke">MNU</text>
<text x="337" y="99" font-size="12.5" font-weight="bold" text-anchor="middle" fill="#8a8a8a" stroke="#f4f4f4" stroke-width="2.5" paint-order="stroke" transform="rotate(-3 337 99)">Długa</text>
</svg>
</div>

<!-- logo + header -->
<div class="abs" style="left:56px;top:75px;width:314px;height:49px;background:rgba(255,255,255,0.62)"></div>
<div class="abs" style="left:6px;top:74px;width:50px;height:50px;background:linear-gradient(160deg,rgba(40,70,170,0.85),rgba(50,50,160,0.9))"></div>
<svg class="abs" style="left:6px;top:74px" width="50" height="50" viewBox="0 0 50 50">
 <circle cx="24.4" cy="15.4" r="7.4" fill="#fff"/>
 <path d="M31 13 Q32.5 8 37.3 7.6" stroke="#fff" stroke-width="2.6" fill="none" stroke-linecap="round"/>
 <path d="M19 20.5 Q13.5 24.5 17 28.3 Q19 29.8 27 29.3 Q33 29 36 31" stroke="#fff" stroke-width="2.6" fill="none" stroke-linecap="round"/>
 <ellipse cx="25.8" cy="35.6" rx="11.2" ry="6.2" fill="none" stroke="#fff" stroke-width="2.6"/>
</svg>
<div class="abs" style="left:136px;top:73px;font-family:'Liberation Serif',serif;font-size:22px;letter-spacing:0.75px;white-space:nowrap;line-height:24px;color:#6b5648;-webkit-text-stroke:0.35px currentColor">g<span style="color:#6b5648">eo</span><span style="color:#3fa2cf">portal</span><span style="color:#5d5048">.gov.pl</span></div>
<div class="abs" style="left:137px;top:80px;width:9px;height:9px;border-radius:50%;background:radial-gradient(circle at 35% 35%,#e8f6ff,#5ab4e0 60%,#2f86b8)"></div>
<div class="abs menu" style="left:63px;width:28px">PLIK</div>
<div class="abs menu" style="left:93px;width:38px">WIDOK</div>
<div class="abs menu" style="left:133px;width:45px">ANALIZY</div>
<div class="abs menu" style="left:180px;width:101px">POBIERANIE DANYCH</div>
<div class="abs menu" style="left:284px;width:78px">WYSZUKIWANIA</div>

<!-- left toolbar -->
<div class="abs" style="left:7px;top:132px;width:29px;height:273px;border-radius:3px;background:rgba(238,236,222,0.84)"></div>
<div class="abs" style="left:8px;top:132px;width:27px;height:22px;border-radius:3px 3px 0 0;background:linear-gradient(#c9c9c9,#e4e4e0)"></div>
<svg class="abs" style="left:15px;top:135px" width="14" height="14" viewBox="0 0 14 14"><circle cx="7" cy="7" r="6.3" fill="#3aa03a"/><circle cx="7" cy="4" r="1.1" fill="#fff"/><rect x="6" y="6" width="2" height="5" fill="#fff"/></svg>
<svg class="abs" style="left:14px;top:155px" width="16" height="16" viewBox="0 0 16 16"><path d="M3 9 Q2 6 4 6 L5 8 L5 3 Q6 2 7 3 L7 7 L7 2 Q8 1 9 2 L9 7 L9 3 Q10 2 11 3 L11 8 L11 5 Q12 4 13 5 L13 10 Q13 15 8 15 Q5 15 3 9Z" fill="#f2d2b0" stroke="#c89c78" stroke-width="0.7"/></svg>
<svg class="abs" style="left:16px;top:177px" width="12" height="14" viewBox="0 0 12 14"><rect x="0.5" y="0.5" width="11" height="13" fill="#dde6f0" stroke="#667" stroke-width="0.9"/><rect x="1.5" y="1.5" width="9" height="2.5" fill="#5a7aa0"/><path d="M2 6h2M5 6h5M2 8.5h2M5 8.5h5M2 11h2M5 11h5" stroke="#445" stroke-width="1"/></svg>
<svg class="abs" style="left:14px;top:198px" width="16" height="14" viewBox="0 0 16 14"><rect x="1" y="1" width="11" height="8" fill="none" stroke="#29a3d8" stroke-width="2"/><path d="M9 6 L9 13 L11 11 L13 14 L14 13 L12 10 L14.5 9.5Z" fill="#222"/></svg>
<svg class="abs" style="left:14px;top:219px" width="16" height="14" viewBox="0 0 16 14"><rect x="1" y="1" width="11" height="8" fill="none" stroke="#e0202a" stroke-width="2"/><path d="M9 6 L9 13 L11 11 L13 14 L14 13 L12 10 L14.5 9.5Z" fill="#222"/></svg>
<svg class="abs" style="left:15px;top:240px" width="14" height="14" viewBox="0 0 14 14"><path d="M2 12 L3 9 L10 2 L12 4 L5 11Z" fill="#f4a830" stroke="#a0602a" stroke-width="0.7"/><path d="M2 12 L3 9 L5 11Z" fill="#333"/></svg>
<div class="abs" style="left:13px;top:262px;width:18px;height:12px;border-radius:2px;background:#8fdcf0;font-size:6.5px;font-weight:bold;color:#2a6a9a;text-align:center;line-height:12px">XYH</div>
<svg class="abs" style="left:15px;top:283px" width="14" height="14" viewBox="0 0 14 14"><circle cx="5.5" cy="5.5" r="4.3" fill="#eef4fb" stroke="#6a8ac0" stroke-width="1.2"/><path d="M3.3 5.5h4.4M5.5 3.3v4.4" stroke="#3a5a9a" stroke-width="1.1"/><path d="M8.5 8.5L13 13" stroke="#9aa" stroke-width="2.2"/></svg>
<svg class="abs" style="left:15px;top:303px" width="14" height="14" viewBox="0 0 14 14"><circle cx="5.5" cy="5.5" r="4.3" fill="#eef4fb" stroke="#6a8ac0" stroke-width="1.2"/><path d="M3.3 5.5h4.4" stroke="#3a5a9a" stroke-width="1.1"/><path d="M8.5 8.5L13 13" stroke="#9aa" stroke-width="2.2"/></svg>
<svg class="abs" style="left:15px;top:325px" width="14" height="14" viewBox="0 0 14 14"><circle cx="7" cy="7" r="6" fill="#3a9ad0"/><path d="M2 5 Q5 3 6 6 Q5 9 8 10 L7 13 Q3 12 2 8Z M8 2 Q11 3 12 6 L9 7Z" fill="#5aa030"/></svg>
<svg class="abs" style="left:14px;top:346px" width="16" height="12" viewBox="0 0 16 12"><path d="M1 6 L7 1 V4 H15 V8 H7 V11Z" fill="#3a9ad8"/></svg>
<svg class="abs" style="left:14px;top:367px" width="16" height="12" viewBox="0 0 16 12"><path d="M15 6 L9 1 V4 H1 V8 H9 V11Z" fill="#3a9ad8"/></svg>
<svg class="abs" style="left:15px;top:387px" width="14" height="14" viewBox="0 0 14 14"><circle cx="7" cy="7" r="5.8" fill="none" stroke="#333" stroke-width="1.3"/><path d="M3 3L11 11M11 3L3 11" stroke="#333" stroke-width="1"/></svg>

<!-- zoom slider -->
<div class="abs" style="left:44px;top:146px;width:5px;height:123px;background:#f8f8f8;border-left:1px solid #999;border-right:1px solid #999"></div>
<div class="abs" style="left:45px;top:149.0px;width:3px;height:1px;background:#555"></div><div class="abs" style="left:45px;top:156.6px;width:3px;height:1px;background:#555"></div><div class="abs" style="left:45px;top:164.2px;width:3px;height:1px;background:#555"></div><div class="abs" style="left:45px;top:171.8px;width:3px;height:1px;background:#555"></div><div class="abs" style="left:45px;top:179.4px;width:3px;height:1px;background:#555"></div><div class="abs" style="left:45px;top:187.0px;width:3px;height:1px;background:#555"></div><div class="abs" style="left:45px;top:194.6px;width:3px;height:1px;background:#555"></div><div class="abs" style="left:45px;top:202.2px;width:3px;height:1px;background:#555"></div><div class="abs" style="left:45px;top:209.8px;width:3px;height:1px;background:#555"></div><div class="abs" style="left:45px;top:217.4px;width:3px;height:1px;background:#555"></div><div class="abs" style="left:45px;top:225.0px;width:3px;height:1px;background:#555"></div><div class="abs" style="left:45px;top:232.6px;width:3px;height:1px;background:#555"></div><div class="abs" style="left:45px;top:240.2px;width:3px;height:1px;background:#555"></div><div class="abs" style="left:45px;top:247.8px;width:3px;height:1px;background:#555"></div><div class="abs" style="left:45px;top:255.4px;width:3px;height:1px;background:#555"></div><div class="abs" style="left:45px;top:263.0px;width:3px;height:1px;background:#555"></div>
<div class="abs" style="left:40px;top:131px;width:13px;height:15px;border-radius:2px;background:linear-gradient(#f4f4f4,#cfcfcf);border:1px solid #aaa"></div>
<svg class="abs" style="left:41px;top:133px" width="11" height="11"><path d="M5.5 1.5V9.5M1.5 5.5H9.5" stroke="#222" stroke-width="1.6"/></svg>
<div class="abs" style="left:40px;top:171px;width:13px;height:8px;border-radius:2px;background:linear-gradient(#f4f4f4,#bdbdbd);border:1px solid #999"></div>
<div class="abs" style="left:43px;top:174.5px;width:7px;height:1.3px;background:#444"></div>
<div class="abs" style="left:40px;top:269px;width:13px;height:15px;border-radius:2px;background:linear-gradient(#f4f4f4,#cfcfcf);border:1px solid #aaa"></div>
<div class="abs" style="left:42.5px;top:276px;width:8px;height:1.6px;background:#222"></div>

<!-- popup -->
<div class="abs" style="left:289px;top:294px;width:236px;height:218px;background:#efefef;border-radius:2px;box-shadow:0 0 2px rgba(0,0,0,0.25)"></div>
<svg class="abs" style="left:510px;top:275px" width="16" height="20"><path d="M0 20 L14 0 L15 20 Z" fill="#efefef"/></svg>
<div class="abs" style="left:289px;top:294px;width:236px;height:20px;background:linear-gradient(#f6f6f6,#e3e3e3);border-bottom:1px solid #cfcfcf;border-radius:2px 2px 0 0"></div>
<svg class="abs" style="left:292px;top:298px" width="26" height="12" viewBox="0 0 26 12"><path d="M1 6 L6 1 H24 V11 H6 Z" fill="#fafafa" stroke="#777" stroke-width="1"/><path d="M10 3.5h2M13 3.5h8M10 6h2M13 6h8M10 8.5h2M13 8.5h8" stroke="#222" stroke-width="1.4"/></svg>
<svg class="abs" style="left:508px;top:297px" width="13" height="13" viewBox="0 0 13 13"><rect x="0.5" y="0.5" width="12" height="12" fill="#f3f3f3" stroke="#999"/><path d="M3 3L10 10M10 3L3 10" stroke="#888" stroke-width="1.1"/></svg>
<div class="abs" style="left:289px;top:314px;width:222px;height:197px;overflow:hidden">
 <div class="abs pop" style="left:28px;top:-2px">
 <div>Pole pow. w ewidencji gruntów (ha)</div>
 <div class="b">0.8059</div>
 <div>Grupa rejestrowa</div>
 <div class="b">7</div>
 <div>Oznaczenie użytku</div>
 <div>Oznaczenie konturu</div>
 <div class="b">RIVa,RIVb,Br/RIVb,RV</div>
 <div>Data publikacji danych</div>
 <div class="b">2025-06-25</div>
 <div>Informacje o pochodzeniu danych</div>
 <div class="b">Organem odpowiedzialnym za</div>
 <div class="b">prezentowane dane ewidencji gruntów</div>
 <div class="b">i budynków jest właściwy miejscowo</div>
 <div class="b">starosta (art. 7d pkt 1 lit. a tiret</div>
 <div class="b">pierwsze ustawy Prawo geodezyjne i</div>
 <div class="b">kartograficzne).</div>
 <div>Informacje dodatkowe o działce</div>
 <div class="b lnk">Pobierz raport o zagospodarowanie</div>
 <div class="b lnk">przestrzennym</div>
 <div>Kod QR</div>
 </div>
</div>
<svg class="abs" style="left:513px;top:318px" width="10" height="8"><path d="M1 7 L5 1 L9 7Z" fill="#888"/></svg>
<div class="abs" style="left:514.5px;top:385px;width:7px;height:71px;border-radius:4px;background:#8a8a8a"></div>
<svg class="abs" style="left:513px;top:500px" width="10" height="8"><path d="M1 1 L5 7 L9 1Z" fill="#888"/></svg>

<div class="abs" style="left:906px;top:77px;width:260px;height:44px;overflow:hidden;background:#fbfcfa">
<svg width="260" height="44" viewBox="0 0 260 44">
<rect width="260" height="44" fill="#f9fbf8"/>
<g fill="#d4efc8" opacity="0.9">
<ellipse cx="30" cy="20" rx="25" ry="8"/><ellipse cx="75" cy="12" rx="20" ry="6"/><ellipse cx="120" cy="35" rx="30" ry="7"/>
<ellipse cx="150" cy="22" rx="22" ry="9"/><ellipse cx="210" cy="40" rx="25" ry="6"/><ellipse cx="60" cy="38" rx="18" ry="5"/>
<ellipse cx="180" cy="8" rx="20" ry="5"/><ellipse cx="240" cy="15" rx="14" ry="7"/>
</g>
<g stroke="#c9a6c8" stroke-width="0.7" fill="none">
<path d="M0 30 L60 26 L130 32 L200 22 L260 20"/><path d="M20 0 L60 44"/><path d="M95 0 L110 44"/><path d="M150 0 L140 44"/>
<path d="M195 0 L235 28 L260 44"/><path d="M230 44 L236 28 L250 0"/><path d="M0 40 L90 38 L160 42"/><path d="M180 30 L236 27 L260 30"/>
</g>
<g stroke="#a9a9a9" stroke-width="0.6" fill="none"><path d="M0 24 L80 20 L170 26 L260 24"/><path d="M45 0 L90 44"/><path d="M200 44 L175 0"/></g>
<path d="M0 9 L260 8" stroke="#8f8fe0" stroke-width="0.8" stroke-dasharray="3 2"/>
<g fill="#9a9a9a" font-size="3.5" font-family="Liberation Sans"><text x="40" y="16">Kamionka</text><text x="130" y="26">Bukowie</text><text x="180" y="14">Szczecinek</text><text x="100" y="40">Konstantynów</text></g>
<g fill="#8aaee8" font-size="3.5" font-family="Liberation Sans"><text x="4" y="30">Bełchatów</text><text x="195" y="31">Andrespol</text></g>
<rect x="229" y="13" width="4.5" height="6" rx="1" fill="#fff" stroke="#e03030" stroke-width="1.2"/>
<path d="M228 21 l5 3 l3 7 l-4 6 l-4-4 l-3-7z" fill="#b0503a" opacity="0.9"/>
<text x="218" y="29" font-size="4.5" fill="#555" font-family="Liberation Sans" font-weight="bold">Łódź</text>
<rect x="0" y="0" width="169" height="18.6" fill="rgba(70,74,70,0.78)"/>
</svg>
<div class="abs" style="left:7px;top:2px;color:#fff;font-weight:bold;font-size:10.3px;line-height:15px;white-space:nowrap">Geoportal krajowy</div>
</div>
<div class="abs" style="left:904px;top:131px;width:263px;height:21px;border-radius:3px;background:rgba(238,238,238,0.72)"></div>
<svg class="abs" style="left:911px;top:137px" width="11" height="11" viewBox="0 0 11 11"><rect x="0.5" y="0.5" width="10" height="10" fill="#f0f0f8" stroke="#777"/><path d="M2 3h2M5 3h4M2 5.5h2M5 5.5h4M2 8h2M5 8h4" stroke="#b03050" stroke-width="1"/></svg>
<svg class="abs" style="left:937px;top:136px" width="14" height="13" viewBox="0 0 14 13"><rect x="2" y="0.5" width="10" height="7" fill="#8fc4e8" stroke="#555" stroke-width="0.8"/><rect x="0.5" y="7" width="13" height="5.5" rx="1" fill="#2b2b2b"/><text x="7" y="11.5" font-size="4.5" fill="#fff" text-anchor="middle" font-family="Liberation Sans" font-weight="bold">WMS</text></svg>
<div class="abs" style="left:961px;top:135.5px;width:39px;height:14px;background:#fff;border:1px solid #8a8a8a;border-radius:2px;font-size:9.5px;line-height:12px;padding-left:4px;color:#222">pol</div>
<svg class="abs" style="left:988px;top:139px" width="8" height="6"><path d="M1 1L4 4.5L7 1" stroke="#111" stroke-width="1.5" fill="none"/></svg>
<div class="abs" style="left:1009px;top:136px;width:12px;height:12px;border-radius:50%;background:radial-gradient(circle at 40% 35%,#9dcb5a,#5e9a2a);color:#2d3a1a;font-size:9px;font-weight:bold;text-align:center;line-height:12px">?</div>
<div class="abs" style="left:1036px;top:135px;width:19px;height:14px;border-radius:4px;background:#f00"></div>
<svg class="abs" style="left:1043px;top:138.5px" width="6" height="7"><path d="M0 0L6 3.5L0 7Z" fill="#fff"/></svg>
<div class="abs" style="left:1056px;top:133.5px;font-size:14px;letter-spacing:-1px;color:#282828;white-space:nowrap;line-height:18px;transform:scaleX(0.72);transform-origin:0 0;font-weight:bold">YouTube</div>
<svg class="abs" style="left:1104px;top:136px" width="13" height="13" viewBox="0 0 13 13"><circle cx="6.5" cy="6.5" r="5.6" fill="none" stroke="#333" stroke-width="1"/><path d="M6.5 2.2L7.6 5.2L10.7 5.3L8.3 7.2L9.1 10.2L6.5 8.5L3.9 10.2L4.7 7.2L2.3 5.3L5.4 5.2Z" fill="none" stroke="#333" stroke-width="0.9"/></svg>
<div class="abs" style="left:1132px;top:132.5px;width:35px;height:19px;border-radius:3px;background:#111"></div>
<div class="abs" style="left:1132px;top:132.5px;width:15px;height:19px;border-radius:3px 0 0 3px;background:#000"></div>
<svg class="abs" style="left:1134px;top:137px" width="10" height="10"><path d="M1 5H7M4.5 2L7.5 5L4.5 8" stroke="#ffe600" stroke-width="1.8" fill="none"/></svg>
<svg class="abs" style="left:1148px;top:136px" width="18" height="12" viewBox="0 0 18 12"><ellipse cx="9" cy="6" rx="7.5" ry="4.6" fill="none" stroke="#ffe600" stroke-width="1.5"/><circle cx="9" cy="6" r="2.6" fill="#ffe600"/></svg>
<!-- gear -->
<div class="abs" style="left:1174px;top:74px;width:20px;height:17px;border-radius:3px;background:rgba(235,235,235,0.55)"></div>
<svg class="abs" style="left:1177px;top:76px" width="16" height="15" viewBox="0 0 16 15"><g fill="#4a4a4a"><circle cx="6" cy="6" r="3.8"/><rect x="5" y="0.5" width="2" height="11"/><rect x="0.5" y="5" width="11" height="2"/><rect x="5" y="0.5" width="2" height="11" transform="rotate(45 6 6)"/><rect x="5" y="0.5" width="2" height="11" transform="rotate(-45 6 6)"/></g><circle cx="6" cy="6" r="1.6" fill="#ddd"/><g fill="#5a5a5a"><circle cx="12.5" cy="11.5" r="2.4"/></g><circle cx="12.5" cy="11.5" r="0.9" fill="#ddd"/></svg>
<!-- right eye column -->
<div class="abs" style="left:1175px;top:100px;width:18px;height:55px;border-radius:3px;background:rgba(240,235,225,0.7)"></div>
<svg class="abs" style="left:1180px;top:107px" width="8" height="6"><ellipse cx="4" cy="3" rx="3.5" ry="2" fill="#555"/></svg>
<svg class="abs" style="left:1178px;top:122px" width="12" height="8"><ellipse cx="6" cy="4" rx="5" ry="3" fill="none" stroke="#555" stroke-width="1.2"/><circle cx="6" cy="4" r="1.6" fill="#555"/></svg>
<div class="abs" style="left:1177px;top:136px;width:15px;height:15px;border-radius:2px;background:#1170c8"></div>
<svg class="abs" style="left:1178px;top:139px" width="13" height="9" viewBox="0 0 13 9"><path d="M0.5 4.5Q6.5 -2 12.5 4.5Q6.5 11 0.5 4.5Z" fill="#fff"/><circle cx="6.5" cy="4.5" r="2" fill="#1170c8"/></svg>

<div class="abs" style="left:904px;top:164px;width:264px;height:357px;border-radius:3px;background:#efefef;box-shadow:0 0 2px rgba(0,0,0,0.2)"></div>
<div class="abs" style="left:907px;top:168px;font-weight:bold;font-size:10px;color:#3a3a3a;white-space:nowrap;line-height:14px">Zawartość mapy</div>
<div class="abs hb" style="left:1124px">?</div><div class="abs hb" style="left:1137px"><div style="position:absolute;left:3px;top:8px;width:6px;height:1px;background:#999"></div></div><div class="abs hb" style="left:1150px"><svg width="12" height="9" style="margin-top:0px"><path d="M3 1.5L9 7.5M9 1.5L3 7.5" stroke="#aaa" stroke-width="1"/></svg></div>
<div class="abs" style="left:907px;top:182px;width:258px;height:22px;background:linear-gradient(#bdbdbd,#e9e9e9 60%,#eeeeee);border-bottom:1px solid #b4b4b4"></div>
<div class="abs tab" style="left:912.5px;width:44px;background:#efefef;font-weight:bold;color:#111;font-size:9.3px">Warstwy</div>
<div class="abs tab" style="left:962px;width:77px">Wyszukaj warstwę</div>
<div class="abs tab" style="left:1046px;width:38px">Legenda</div>
<div class="abs" style="left:912.5px;top:207.5px;width:215px;height:12px;border:1px solid #b5b5b5;border-radius:2px;background:linear-gradient(#fdfdfd,#e4e4e4);font-size:7.9px;line-height:10px;text-align:center;color:#222;white-space:nowrap">Rozwiń inf. o wszystkich warstwach</div>
<svg class="abs" style="left:1155px;top:205px" width="9" height="8"><path d="M0.5 7.5L4.5 1L8.5 7.5Z" fill="#888"/></svg>
<div class="abs" style="left:1155.5px;top:217px;width:7px;height:154px;border-radius:4px;background:#8a8a8a"></div>
<svg class="abs" style="left:1155px;top:496px" width="9" height="8"><path d="M0.5 0.5L4.5 7L8.5 0.5Z" fill="#999"/></svg>
<svg class="abs" style="left:910px;top:508px" width="8" height="9"><path d="M7 0.5L1 4.5L7 8.5Z" fill="#888"/></svg>
<div class="abs" style="left:921px;top:508.5px;width:138px;height:7px;border-radius:4px;background:#8a8a8a"></div>
<svg class="abs" style="left:1143px;top:508px" width="8" height="9"><path d="M1 0.5L7 4.5L1 8.5Z" fill="#888"/></svg>

<div class="abs" style="left:907px;top:221px;width:246px;height:284px;overflow:hidden">
<svg class="abs" style="left:6px;top:4.599999999999994px" width="8" height="8" viewBox="0 0 8 8"><rect x="0.5" y="0.5" width="7" height="7" fill="#f4f4ff" stroke="#5a6ad0" stroke-width="0.9"/><path d="M1.7 4H6.3" stroke="#2a3ab0" stroke-width="1.1"/><path d="M4 1.7V6.3" stroke="#2a3ab0" stroke-width="1.1"/></svg>
<div class="abs" style="left:16.5px;top:2.5999999999999943px;width:12px;height:12px;border-radius:2px;background:#fff;border:1px solid #767676"></div>
<div class="abs" style="left:32px;top:3.5999999999999943px;width:10px;height:10px;border-radius:50%;background:radial-gradient(circle at 40% 35%,#9ef05a,#4cc420)"></div>
<svg class="abs" style="left:43px;top:2.5999999999999943px" width="12" height="13" viewBox="0 0 12 13"><rect x="0.5" y="0.5" width="11" height="8" fill="#7ab6e0" stroke="#777" stroke-width="0.6"/><path d="M0.5 6 L4 4 L7 6 L11.5 3.5 V8.5 H0.5Z" fill="#7cb860"/><rect x="0.3" y="7.5" width="11.4" height="5" fill="#333"/><text x="6" y="11.8" font-size="4.3" fill="#fff" text-anchor="middle" font-family="Liberation Sans" font-weight="bold">WMS</text></svg>
<div class="abs lt" style="left:60px;top:2.5999999999999943px">Wybory Prezydenckie 2025</div>
<svg class="abs" style="left:6px;top:25.69999999999999px" width="8" height="8" viewBox="0 0 8 8"><rect x="0.5" y="0.5" width="7" height="7" fill="#f4f4ff" stroke="#5a6ad0" stroke-width="0.9"/><path d="M1.7 4H6.3" stroke="#2a3ab0" stroke-width="1.1"/><path d="M4 1.7V6.3" stroke="#2a3ab0" stroke-width="1.1"/></svg>
<div class="abs" style="left:16.5px;top:23.69999999999999px;width:12px;height:12px;border-radius:2px;background:#fff;border:1px solid #767676"></div>
<div class="abs" style="left:32px;top:24.69999999999999px;width:10px;height:10px;border-radius:50%;background:radial-gradient(circle at 40% 35%,#9ef05a,#4cc420)"></div>
<svg class="abs" style="left:43px;top:23.69999999999999px" width="12" height="13" viewBox="0 0 12 13"><rect x="0.5" y="0.5" width="11" height="8" fill="#7ab6e0" stroke="#777" stroke-width="0.6"/><path d="M0.5 6 L4 4 L7 6 L11.5 3.5 V8.5 H0.5Z" fill="#7cb860"/><rect x="0.3" y="7.5" width="11.4" height="5" fill="#333"/><text x="6" y="11.8" font-size="4.3" fill="#fff" text-anchor="middle" font-family="Liberation Sans" font-weight="bold">WMS</text></svg>
<div class="abs lt" style="left:60px;top:23.69999999999999px">Strefa buforowa przy granicy polsko-białoruskiej</div>
<svg class="abs" style="left:6px;top:45px" width="8" height="8" viewBox="0 0 8 8"><rect x="0.5" y="0.5" width="7" height="7" fill="#f4f4ff" stroke="#5a6ad0" stroke-width="0.9"/><path d="M1.7 4H6.3" stroke="#2a3ab0" stroke-width="1.1"/><path d="M4 1.7V6.3" stroke="#2a3ab0" stroke-width="1.1"/></svg>
<div class="abs" style="left:16.5px;top:43px;width:12px;height:12px;border-radius:2px;background:#1a73e8"></div><svg class="abs" style="left:17.5px;top:44px" width="10" height="10"><path d="M1.5 5L4 7.5L8.8 2" stroke="#fff" stroke-width="1.6" fill="none"/></svg>
<svg class="abs" style="left:32px;top:44px" width="11" height="10" viewBox="0 0 11 10"><path d="M0.5 2V9.5H10.5V3H5L4 1.5H1Z" fill="#f6d55a" stroke="#c8a030" stroke-width="0.7"/><path d="M0.5 9.5L2 4H11L10.5 9.5Z" fill="#fbe57a" stroke="#c8a030" stroke-width="0.6"/></svg>
<div class="abs ld" style="left:44.5px;top:43px">Dane do pobrania</div>
<svg class="abs" style="left:6px;top:65px" width="8" height="8" viewBox="0 0 8 8"><rect x="0.5" y="0.5" width="7" height="7" fill="#f4f4ff" stroke="#5a6ad0" stroke-width="0.9"/><path d="M1.7 4H6.3" stroke="#2a3ab0" stroke-width="1.1"/><path d="M4 1.7V6.3" stroke="#2a3ab0" stroke-width="1.1"/></svg>
<div class="abs" style="left:16.5px;top:63px;width:12px;height:12px;border-radius:2px;background:#fff;border:1px solid #767676"></div>
<div class="abs" style="left:32px;top:64px;width:10px;height:10px;border-radius:50%;background:radial-gradient(circle at 40% 35%,#9ef05a,#4cc420)"></div>
<svg class="abs" style="left:43px;top:63px" width="12" height="13" viewBox="0 0 12 13"><rect x="0.5" y="0.5" width="11" height="8" fill="#7ab6e0" stroke="#777" stroke-width="0.6"/><path d="M0.5 6 L4 4 L7 6 L11.5 3.5 V8.5 H0.5Z" fill="#7cb860"/><rect x="0.3" y="7.5" width="11.4" height="5" fill="#333"/><text x="6" y="11.8" font-size="4.3" fill="#fff" text-anchor="middle" font-family="Liberation Sans" font-weight="bold">WMS</text></svg>
<div class="abs lt" style="left:60px;top:63px">Państwowy Rejestr Granic</div>
<svg class="abs" style="left:6px;top:86px" width="8" height="8" viewBox="0 0 8 8"><rect x="0.5" y="0.5" width="7" height="7" fill="#f4f4ff" stroke="#5a6ad0" stroke-width="0.9"/><path d="M1.7 4H6.3" stroke="#2a3ab0" stroke-width="1.1"/><path d="M4 1.7V6.3" stroke="#2a3ab0" stroke-width="1.1"/></svg>
<div class="abs" style="left:16.5px;top:84px;width:12px;height:12px;border-radius:2px;background:#1a73e8"></div><svg class="abs" style="left:17.5px;top:85px" width="10" height="10"><path d="M1.5 5L4 7.5L8.8 2" stroke="#fff" stroke-width="1.6" fill="none"/></svg>
<div class="abs" style="left:32px;top:85px;width:10px;height:10px;border-radius:50%;background:radial-gradient(circle at 40% 35%,#9ef05a,#4cc420)"></div>
<svg class="abs" style="left:43px;top:84px" width="12" height="13" viewBox="0 0 12 13"><rect x="0.5" y="0.5" width="11" height="8" fill="#7ab6e0" stroke="#777" stroke-width="0.6"/><path d="M0.5 6 L4 4 L7 6 L11.5 3.5 V8.5 H0.5Z" fill="#7cb860"/><rect x="0.3" y="7.5" width="11.4" height="5" fill="#333"/><text x="6" y="11.8" font-size="4.3" fill="#fff" text-anchor="middle" font-family="Liberation Sans" font-weight="bold">WMS</text></svg>
<div class="abs lt" style="left:60px;top:84px">Adresy i ulice</div>
<svg class="abs" style="left:6px;top:107px" width="8" height="8" viewBox="0 0 8 8"><rect x="0.5" y="0.5" width="7" height="7" fill="#f4f4ff" stroke="#5a6ad0" stroke-width="0.9"/><path d="M1.7 4H6.3" stroke="#2a3ab0" stroke-width="1.1"/><path d="M4 1.7V6.3" stroke="#2a3ab0" stroke-width="1.1"/></svg>
<div class="abs" style="left:16.5px;top:105px;width:12px;height:12px;border-radius:2px;background:#fff;border:1px solid #767676"></div>
<div class="abs" style="left:32px;top:106px;width:10px;height:10px;border-radius:50%;background:radial-gradient(circle at 40% 35%,#9ef05a,#4cc420)"></div>
<svg class="abs" style="left:43px;top:105px" width="12" height="13" viewBox="0 0 12 13"><rect x="0.5" y="0.5" width="11" height="8" fill="#7ab6e0" stroke="#777" stroke-width="0.6"/><path d="M0.5 6 L4 4 L7 6 L11.5 3.5 V8.5 H0.5Z" fill="#7cb860"/><rect x="0.3" y="7.5" width="11.4" height="5" fill="#333"/><text x="6" y="11.8" font-size="4.3" fill="#fff" text-anchor="middle" font-family="Liberation Sans" font-weight="bold">WMS</text></svg>
<div class="abs lt" style="left:60px;top:105px">Ceny nieruchomości</div>
<svg class="abs" style="left:6px;top:128px" width="8" height="8" viewBox="0 0 8 8"><rect x="0.5" y="0.5" width="7" height="7" fill="#f4f4ff" stroke="#5a6ad0" stroke-width="0.9"/><path d="M1.7 4H6.3" stroke="#2a3ab0" stroke-width="1.1"/><path d="M4 1.7V6.3" stroke="#2a3ab0" stroke-width="1.1"/></svg>
<div class="abs" style="left:16.5px;top:126px;width:12px;height:12px;border-radius:2px;background:#1a73e8"></div><svg class="abs" style="left:17.5px;top:127px" width="10" height="10"><path d="M1.5 5L4 7.5L8.8 2" stroke="#fff" stroke-width="1.6" fill="none"/></svg>
<div class="abs" style="left:32px;top:127px;width:10px;height:10px;border-radius:50%;background:radial-gradient(circle at 40% 35%,#9ef05a,#4cc420)"></div>
<svg class="abs" style="left:43px;top:126px" width="12" height="13" viewBox="0 0 12 13"><rect x="0.5" y="0.5" width="11" height="8" fill="#7ab6e0" stroke="#777" stroke-width="0.6"/><path d="M0.5 6 L4 4 L7 6 L11.5 3.5 V8.5 H0.5Z" fill="#7cb860"/><rect x="0.3" y="7.5" width="11.4" height="5" fill="#333"/><text x="6" y="11.8" font-size="4.3" fill="#fff" text-anchor="middle" font-family="Liberation Sans" font-weight="bold">WMS</text></svg>
<div class="abs lt" style="left:60px;top:126px">Ewidencja gruntów i budynków</div>
<svg class="abs" style="left:6px;top:149.5px" width="8" height="8" viewBox="0 0 8 8"><rect x="0.5" y="0.5" width="7" height="7" fill="#f4f4ff" stroke="#5a6ad0" stroke-width="0.9"/><path d="M1.7 4H6.3" stroke="#2a3ab0" stroke-width="1.1"/><path d="M4 1.7V6.3" stroke="#2a3ab0" stroke-width="1.1"/></svg>
<div class="abs" style="left:16.5px;top:147.5px;width:12px;height:12px;border-radius:2px;background:#fff;border:1px solid #767676"></div>
<div class="abs" style="left:32px;top:148.5px;width:10px;height:10px;border-radius:50%;background:radial-gradient(circle at 40% 35%,#9ef05a,#4cc420)"></div>
<svg class="abs" style="left:43px;top:147.5px" width="12" height="13" viewBox="0 0 12 13"><rect x="0.5" y="0.5" width="11" height="8" fill="#7ab6e0" stroke="#777" stroke-width="0.6"/><path d="M0.5 6 L4 4 L7 6 L11.5 3.5 V8.5 H0.5Z" fill="#7cb860"/><rect x="0.3" y="7.5" width="11.4" height="5" fill="#333"/><text x="6" y="11.8" font-size="4.3" fill="#fff" text-anchor="middle" font-family="Liberation Sans" font-weight="bold">WMS</text></svg>
<div class="abs lt" style="left:60px;top:147.5px">Uzbrojenie terenu</div>
<svg class="abs" style="left:6px;top:170.5px" width="8" height="8" viewBox="0 0 8 8"><rect x="0.5" y="0.5" width="7" height="7" fill="#f4f4ff" stroke="#5a6ad0" stroke-width="0.9"/><path d="M1.7 4H6.3" stroke="#2a3ab0" stroke-width="1.1"/><path d="M4 1.7V6.3" stroke="#2a3ab0" stroke-width="1.1"/></svg>
<div class="abs" style="left:16.5px;top:168.5px;width:12px;height:12px;border-radius:2px;background:#fff;border:1px solid #767676"></div>
<div class="abs" style="left:32px;top:169.5px;width:10px;height:10px;border-radius:50%;background:radial-gradient(circle at 40% 35%,#9ef05a,#4cc420)"></div>
<svg class="abs" style="left:43px;top:168.5px" width="12" height="13" viewBox="0 0 12 13"><rect x="0.5" y="0.5" width="11" height="8" fill="#7ab6e0" stroke="#777" stroke-width="0.6"/><path d="M0.5 6 L4 4 L7 6 L11.5 3.5 V8.5 H0.5Z" fill="#7cb860"/><rect x="0.3" y="7.5" width="11.4" height="5" fill="#333"/><text x="6" y="11.8" font-size="4.3" fill="#fff" text-anchor="middle" font-family="Liberation Sans" font-weight="bold">WMS</text></svg>
<div class="abs lt" style="left:60px;top:168.5px">Obiekty topograficzne (BDOT500)</div>
<svg class="abs" style="left:6px;top:189px" width="8" height="8" viewBox="0 0 8 8"><rect x="0.5" y="0.5" width="7" height="7" fill="#f4f4ff" stroke="#5a6ad0" stroke-width="0.9"/><path d="M1.7 4H6.3" stroke="#2a3ab0" stroke-width="1.1"/><path d="M4 1.7V6.3" stroke="#2a3ab0" stroke-width="1.1"/></svg>
<div class="abs" style="left:16.5px;top:187px;width:12px;height:12px;border-radius:2px;background:#1a73e8"></div><svg class="abs" style="left:17.5px;top:188px" width="10" height="10"><path d="M1.5 5L4 7.5L8.8 2" stroke="#fff" stroke-width="1.6" fill="none"/></svg>
<svg class="abs" style="left:32px;top:188px" width="11" height="10" viewBox="0 0 11 10"><path d="M0.5 2V9.5H10.5V3H5L4 1.5H1Z" fill="#f6d55a" stroke="#c8a030" stroke-width="0.7"/><path d="M0.5 9.5L2 4H11L10.5 9.5Z" fill="#fbe57a" stroke="#c8a030" stroke-width="0.6"/></svg>
<div class="abs ld" style="left:44.5px;top:187px">Modernizacja EGiB</div>
<svg class="abs" style="left:6px;top:206.5px" width="8" height="8" viewBox="0 0 8 8"><rect x="0.5" y="0.5" width="7" height="7" fill="#f4f4ff" stroke="#5a6ad0" stroke-width="0.9"/><path d="M1.7 4H6.3" stroke="#2a3ab0" stroke-width="1.1"/></svg>
<div class="abs" style="left:16.5px;top:204.5px;width:12px;height:12px;border-radius:2px;background:#1a73e8"></div><svg class="abs" style="left:17.5px;top:205.5px" width="10" height="10"><path d="M1.5 5L4 7.5L8.8 2" stroke="#fff" stroke-width="1.6" fill="none"/></svg>
<svg class="abs" style="left:32px;top:205.5px" width="11" height="10" viewBox="0 0 11 10"><path d="M0.5 2V9.5H10.5V3H5L4 1.5H1Z" fill="#f6d55a" stroke="#c8a030" stroke-width="0.7"/><path d="M0.5 9.5L2 4H11L10.5 9.5Z" fill="#fbe57a" stroke="#c8a030" stroke-width="0.6"/></svg>
<div class="abs ld" style="left:44.5px;top:204.5px">Planowanie i zagospodarowanie przestrzenne</div>
<svg class="abs" style="left:19px;top:226px" width="8" height="8" viewBox="0 0 8 8"><rect x="0.5" y="0.5" width="7" height="7" fill="#f4f4ff" stroke="#5a6ad0" stroke-width="0.9"/><path d="M1.7 4H6.3" stroke="#2a3ab0" stroke-width="1.1"/><path d="M4 1.7V6.3" stroke="#2a3ab0" stroke-width="1.1"/></svg>
<div class="abs" style="left:29.5px;top:224px;width:12px;height:12px;border-radius:2px;background:#1a73e8"></div><svg class="abs" style="left:30.5px;top:225px" width="10" height="10"><path d="M1.5 5L4 7.5L8.8 2" stroke="#fff" stroke-width="1.6" fill="none"/></svg>
<div class="abs" style="left:45px;top:225px;width:10px;height:10px;border-radius:50%;background:radial-gradient(circle at 40% 35%,#9ef05a,#4cc420)"></div>
<svg class="abs" style="left:56px;top:224px" width="12" height="13" viewBox="0 0 12 13"><rect x="0.5" y="0.5" width="11" height="8" fill="#7ab6e0" stroke="#777" stroke-width="0.6"/><path d="M0.5 6 L4 4 L7 6 L11.5 3.5 V8.5 H0.5Z" fill="#7cb860"/><rect x="0.3" y="7.5" width="11.4" height="5" fill="#333"/><text x="6" y="11.8" font-size="4.3" fill="#fff" text-anchor="middle" font-family="Liberation Sans" font-weight="bold">WMS</text></svg>
<div class="abs lt" style="left:73px;top:224px">Miejscowe plany zagospodarowania przestrzennego</div>
<svg class="abs" style="left:19px;top:247px" width="8" height="8" viewBox="0 0 8 8"><rect x="0.5" y="0.5" width="7" height="7" fill="#f4f4ff" stroke="#5a6ad0" stroke-width="0.9"/><path d="M1.7 4H6.3" stroke="#2a3ab0" stroke-width="1.1"/><path d="M4 1.7V6.3" stroke="#2a3ab0" stroke-width="1.1"/></svg>
<div class="abs" style="left:29.5px;top:245px;width:12px;height:12px;border-radius:2px;background:#fff;border:1px solid #767676"></div>
<div class="abs" style="left:45px;top:246px;width:10px;height:10px;border-radius:50%;background:radial-gradient(circle at 40% 35%,#9ef05a,#4cc420)"></div>
<svg class="abs" style="left:56px;top:245px" width="12" height="13" viewBox="0 0 12 13"><rect x="0.5" y="0.5" width="11" height="8" fill="#7ab6e0" stroke="#777" stroke-width="0.6"/><path d="M0.5 6 L4 4 L7 6 L11.5 3.5 V8.5 H0.5Z" fill="#7cb860"/><rect x="0.3" y="7.5" width="11.4" height="5" fill="#333"/><text x="6" y="11.8" font-size="4.3" fill="#fff" text-anchor="middle" font-family="Liberation Sans" font-weight="bold">WMS</text></svg>
<div class="abs lt" style="left:73px;top:245px">Studium uwarunkowań i kierunków zagospodarowania</div>
<svg class="abs" style="left:19px;top:268px" width="8" height="8" viewBox="0 0 8 8"><rect x="0.5" y="0.5" width="7" height="7" fill="#f4f4ff" stroke="#5a6ad0" stroke-width="0.9"/><path d="M1.7 4H6.3" stroke="#2a3ab0" stroke-width="1.1"/><path d="M4 1.7V6.3" stroke="#2a3ab0" stroke-width="1.1"/></svg>
<div class="abs" style="left:29.5px;top:266px;width:12px;height:12px;border-radius:2px;background:#fff;border:1px solid #767676"></div>
<div class="abs" style="left:45px;top:267px;width:10px;height:10px;border-radius:50%;background:radial-gradient(circle at 40% 35%,#9ef05a,#4cc420)"></div>
<svg class="abs" style="left:56px;top:266px" width="12" height="13" viewBox="0 0 12 13"><rect x="0.5" y="0.5" width="11" height="8" fill="#7ab6e0" stroke="#777" stroke-width="0.6"/><path d="M0.5 6 L4 4 L7 6 L11.5 3.5 V8.5 H0.5Z" fill="#7cb860"/><rect x="0.3" y="7.5" width="11.4" height="5" fill="#333"/><text x="6" y="11.8" font-size="4.3" fill="#fff" text-anchor="middle" font-family="Liberation Sans" font-weight="bold">WMS</text></svg>
<div class="abs lt" style="left:73px;top:266px">Strefy wyłaczone wokół turbin wiatrowych</div>
</div>
<!-- ============ STATUS ============ -->
<div id="status"></div>
<div class="abs" style="left:0;top:622px;width:22px;height:15px;background:rgba(215,215,200,0.75)"></div>
<svg class="abs" style="left:5px;top:624px" width="14" height="11" viewBox="0 0 14 11"><rect x="1" y="4" width="8" height="6" fill="none" stroke="#333" stroke-width="1.5"/><path d="M9 4L12 1" stroke="#333" stroke-width="1.5"/></svg>
<div class="abs" style="left:322px;top:623px;font-size:9px;line-height:13px;color:#3a3a3a;white-space:nowrap;letter-spacing:0.1px">Układ współrzędnych mapy <b style="color:#222">1992 (EPSG 2180)</b> &nbsp; <b><i>X:</i></b> 411176.08 <b><i>Y:</i></b> 540514.52 &nbsp; <b><i>N:</i></b> 51°33'56.28" <b><i>E:</i></b> 19°35'04.90" &nbsp;Aktualna Skala <b style="color:#222">1:2000</b></div>
<div class="abs" style="left:1179px;top:622px;width:21px;height:15px;background:rgba(230,230,230,0.8)"></div>
<svg class="abs" style="left:1184px;top:626px" width="10" height="7"><path d="M0.5 0.5L5 6.5L9.5 0.5Z" fill="#555"/></svg>

<!-- ============ TASKBAR ============ -->
<div id="taskbar"></div>
<svg class="abs" style="left:15px;top:650px" width="20" height="13" viewBox="0 0 20 13"><path d="M1 4.5H13Q17 4.5 17 2.5M1 8.5H14Q18 8.5 18 11" stroke="#8aa0bc" stroke-width="2.2" fill="none" stroke-linecap="round"/><circle cx="17" cy="6.5" r="2.2" fill="#6f86a6"/></svg>
<div class="abs" style="left:40px;top:644px;font-size:9.8px;color:#2a2a2a;line-height:12px;white-space:nowrap">21°C</div>
<div class="abs" style="left:40px;top:656px;font-size:9.7px;color:#555;line-height:12px;white-space:nowrap">Wietrznie</div>
<svg class="abs" style="left:383px;top:647px" width="18" height="18" viewBox="0 0 18 18"><defs><linearGradient id="wg" x1="0" y1="0" x2="1" y2="1"><stop offset="0" stop-color="#4cc2ff"/><stop offset="1" stop-color="#0a74d6"/></linearGradient></defs><rect x="0" y="0" width="8.5" height="8.5" fill="url(#wg)"/><rect x="9.5" y="0" width="8.5" height="8.5" fill="url(#wg)"/><rect x="0" y="9.5" width="8.5" height="8.5" fill="url(#wg)"/><rect x="9.5" y="9.5" width="8.5" height="8.5" fill="url(#wg)"/></svg>
<div class="abs" style="left:412.5px;top:644.5px;width:170px;height:24px;border-radius:12px;background:#faf3f3;border:1px solid #eadcdc"></div>
<svg class="abs" style="left:421px;top:651px" width="13" height="13" viewBox="0 0 13 13"><circle cx="5.5" cy="5.5" r="4.2" fill="none" stroke="#222" stroke-width="1.5"/><path d="M8.5 8.5L12 12" stroke="#222" stroke-width="1.6"/></svg>
<div class="abs" style="left:441px;top:650px;font-size:10.3px;color:#555;line-height:13px">Wyszukaj</div>
<svg class="abs" style="left:593px;top:647px" width="19" height="18" viewBox="0 0 19 18"><rect x="5" y="0.5" width="13" height="11" rx="1" fill="#d9d9d9" stroke="#bbb" stroke-width="0.5"/><rect x="0" y="5" width="13" height="12" rx="1" fill="#1c1c1c"/><rect x="5" y="5" width="8" height="7" fill="#9a9a9a"/></svg>
<svg class="abs" style="left:627px;top:647px" width="19" height="19" viewBox="0 0 19 19"><defs><linearGradient id="eg" x1="0" y1="1" x2="1" y2="0"><stop offset="0" stop-color="#0c59a4"/><stop offset="0.5" stop-color="#1b9de2"/><stop offset="1" stop-color="#50e6a0"/></linearGradient></defs><circle cx="9.5" cy="9.5" r="9" fill="url(#eg)"/><path d="M5 11Q6 5 11 5.5Q15 6 14.5 10H7.5Q8 14 13 13.5Q15.5 13.2 17 12Q15 17.5 9.5 17.5Q4.5 17 5 11Z" fill="#fff" opacity="0.9"/></svg>
<svg class="abs" style="left:662px;top:647px" width="19" height="18" viewBox="0 0 19 18"><path d="M0.5 2.5H7L8.5 4H18.5V17.5H0.5Z" fill="#e9a91a"/><rect x="0.5" y="6" width="18" height="11.5" fill="#fcd34d"/><rect x="5" y="12" width="9" height="3" rx="0.5" fill="#1b74d6"/></svg>
<svg class="abs" style="left:696px;top:647px" width="19" height="18" viewBox="0 0 19 18"><path d="M0.5 7L9.5 0.8L18.5 7V17.5H0.5Z" fill="#0d6fc9"/><path d="M0.5 7.5L9.5 13L18.5 7.5V17.5H0.5Z" fill="#3fb1f0"/><path d="M2.5 6.5H16.5V10L9.5 13L2.5 10Z" fill="#fff"/></svg>
<svg class="abs" style="left:730px;top:647px" width="20" height="18" viewBox="0 0 20 18"><defs><linearGradient id="ag" x1="0" y1="0" x2="1" y2="1"><stop offset="0" stop-color="#3a5cf0"/><stop offset="1" stop-color="#6a3fe0"/></linearGradient></defs><rect x="0" y="0" width="20" height="18" rx="1" fill="url(#ag)"/><path d="M5 14L9 4M9 14L13 4L15 14" stroke="#fff" stroke-width="1.8" fill="none"/></svg>
<svg class="abs" style="left:764px;top:646px" width="20" height="20" viewBox="0 0 20 20"><defs><radialGradient id="fg" cx="0.6" cy="0.3" r="0.8"><stop offset="0" stop-color="#ffe14a"/><stop offset="0.45" stop-color="#ff7a1a"/><stop offset="1" stop-color="#e0245e"/></radialGradient></defs><circle cx="10" cy="10.5" r="9" fill="url(#fg)"/><circle cx="10" cy="11" r="4.5" fill="#7a3cc8"/></svg>
<div class="abs" style="left:794px;top:641px;width:30px;height:30px;border-radius:4px;background:rgba(255,255,255,0.55)"></div>
<svg class="abs" style="left:799px;top:647px" width="19" height="19" viewBox="0 0 19 19"><circle cx="9.5" cy="9.5" r="9" fill="#db4437"/><path d="M9.5 9.5L1.7 5A9 9 0 0 0 6 17.6Z" fill="#0f9d58"/><path d="M9.5 9.5L6 17.6A9 9 0 0 0 18.5 9.5Z" fill="#ffcd40"/><circle cx="9.5" cy="9.5" r="4.3" fill="#fff"/><circle cx="9.5" cy="9.5" r="3.3" fill="#1a73e8"/></svg>
<div class="abs" style="left:804px;top:668.5px;width:10px;height:2.5px;border-radius:2px;background:#1a6ed0"></div>
<svg class="abs" style="left:1029px;top:653px" width="9" height="6"><path d="M0.8 5.2L4.5 1.2L8.2 5.2" stroke="#222" stroke-width="1.2" fill="none"/></svg>
<svg class="abs" style="left:1051px;top:650px" width="15" height="14" viewBox="0 0 15 14"><path d="M2.5 6A4.5 4.5 0 0 1 11 3.5M12 8A4.5 4.5 0 0 1 3.5 10.5" stroke="#333" stroke-width="1.2" fill="none"/><path d="M9 1.5L11.5 3.5L9.5 6M5.5 8L3 10.5L5.5 12.5" stroke="#333" stroke-width="1.1" fill="none"/><circle cx="10.5" cy="10" r="2.8" fill="#f59b1a"/></svg>
<svg class="abs" style="left:1076px;top:651px" width="14" height="10" viewBox="0 0 14 10"><path d="M1 3.5Q7 -1.5 13 3.5M3 5.5Q7 2 11 5.5M5 7.5Q7 6 9 7.5" stroke="#222" stroke-width="1.2" fill="none"/><circle cx="7" cy="9" r="0.9" fill="#222"/></svg>
<svg class="abs" style="left:1095px;top:650px" width="14" height="12" viewBox="0 0 14 12"><path d="M1 4H3.5L7 1V11L3.5 8H1Z" fill="none" stroke="#222" stroke-width="1.1"/><path d="M9 4Q10.5 6 9 8M11 2.5Q13.5 6 11 9.5" stroke="#888" stroke-width="0.9" fill="none"/></svg>
<svg class="abs" style="left:1114px;top:652px" width="14" height="8" viewBox="0 0 14 8"><rect x="0.6" y="0.6" width="11" height="6.8" rx="1.2" fill="none" stroke="#222" stroke-width="1.1"/><rect x="2" y="2" width="8.2" height="4" fill="#222"/><rect x="12.2" y="2.6" width="1.3" height="2.8" fill="#222"/></svg>
<div class="abs" style="left:1140px;top:644px;width:45px;text-align:right;font-size:9.8px;color:#222;line-height:12px">16:00</div>
<div class="abs" style="left:1130px;top:657px;width:55px;text-align:right;font-size:9.8px;color:#222;line-height:12px;letter-spacing:-0.25px">25.06.2025</div>

</body></html>
